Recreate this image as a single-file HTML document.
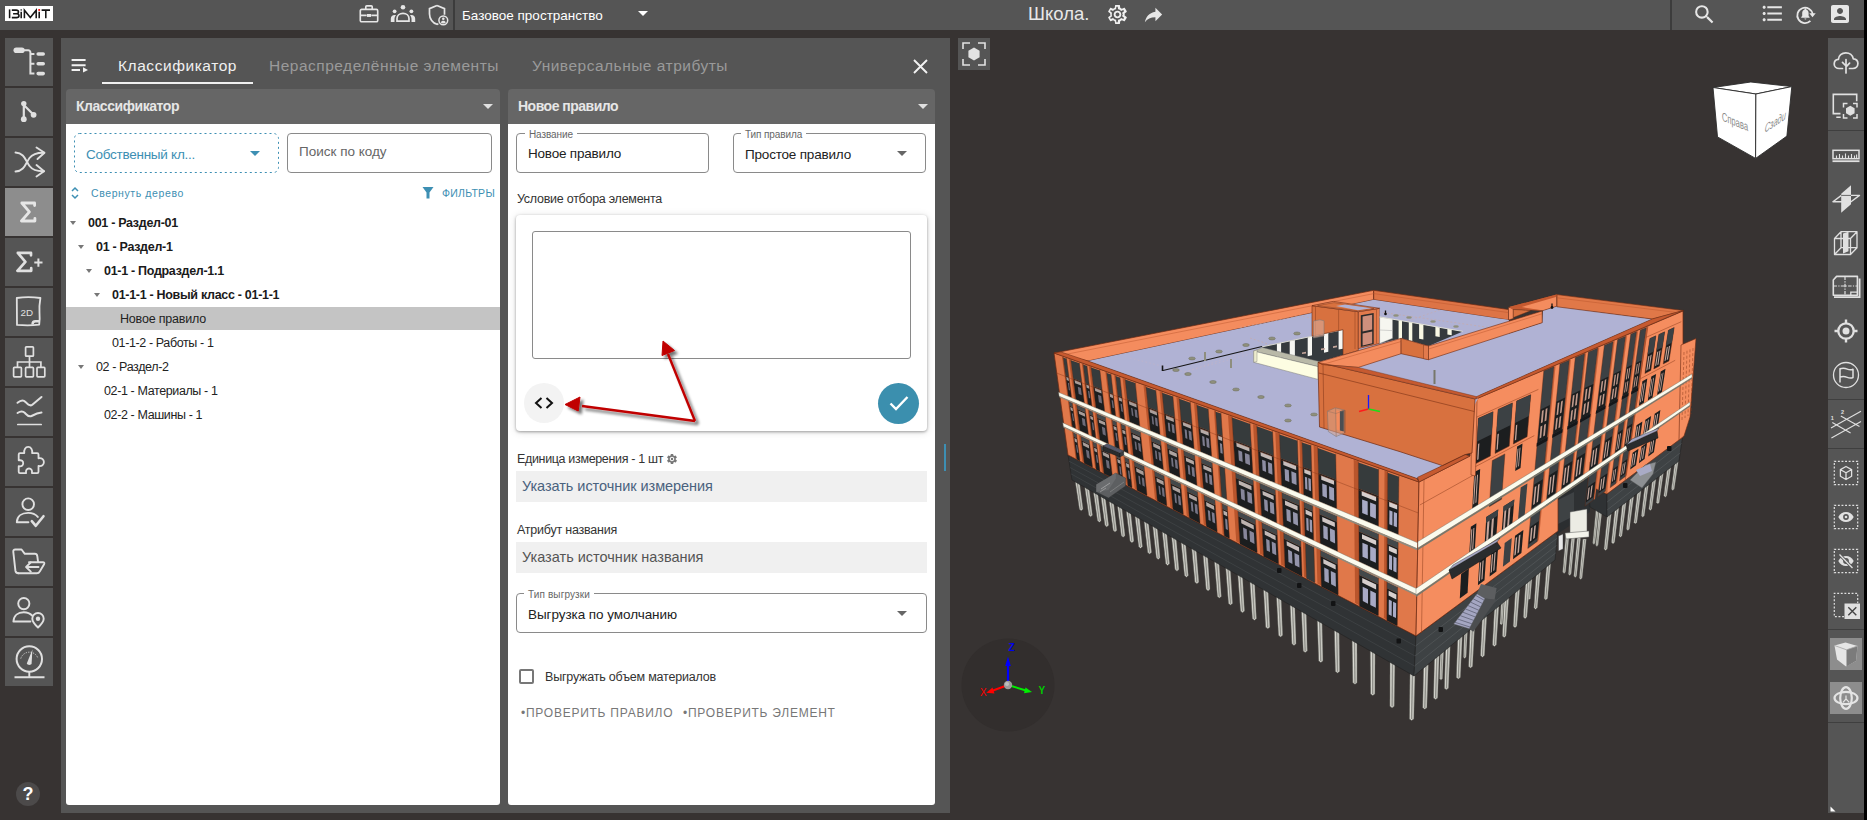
<!DOCTYPE html>
<html lang="ru">
<head>
<meta charset="utf-8">
<title>BIMIT</title>
<style>
*{box-sizing:border-box;margin:0;padding:0}
html,body{width:1867px;height:820px;overflow:hidden;background:#000}
body{font-family:"Liberation Sans",sans-serif;position:relative;color:#222}
.abs{position:absolute}
#app{position:absolute;left:0;top:0;width:1864px;height:820px;background:#373332;overflow:hidden}
#topbar{position:absolute;left:0;top:0;width:1864px;height:30px;background:#555}
.t{position:absolute;white-space:nowrap;line-height:1}
.sb{position:absolute;left:5px;width:48px;height:48px;background:#555}
.sb.act{background:#8d8d8d}
.sb svg{position:absolute;left:0;top:0}
#panel{position:absolute;left:61px;top:38px;width:889px;height:775px;background:#555}
.hdr{position:absolute;top:51px;height:35px;background:#666;border-radius:4px 4px 0 0}
.hdr .t{color:#e6e6e6;font-weight:bold;font-size:14px;top:10px;left:10px}
.body{position:absolute;top:86px;height:681px;background:#fff;border-radius:0 0 3px 3px}
.fld{position:absolute;border:1px solid #8a8a8a;border-radius:4px;height:40px}
.lbl{position:absolute;font-size:10px;letter-spacing:-.1px;color:#666;background:#fff;padding:0 4px;line-height:1;white-space:nowrap}
.row{position:absolute;left:0;width:434px;height:24px;font-size:12.5px;line-height:24px;white-space:nowrap;color:#222;letter-spacing:-.38px}
.row b{font-weight:bold;color:#1a1a1a;letter-spacing:-.3px}
.car{position:absolute;top:10px;width:0;height:0;border-left:3.5px solid transparent;border-right:3.5px solid transparent;border-top:4px solid #777}
#rtool{position:absolute;left:1828px;top:38px;width:36px;height:775px;background:#555}
.rb{position:absolute;left:0;width:36px;height:36px}
</style>
</head>
<body>
<div id="app">

<!-- ================= 3D VIEWPORT ================= -->
<svg class="abs" style="left:950px;top:30px" width="878" height="790" viewBox="950 30 878 790">
<circle cx="1008" cy="685" r="46.500" fill="#322e2d"/>
<polyline points="1008,685 1008,661" fill="none" stroke="#0000ff" stroke-width="2.2"/>
<polygon points="1008,656.5 1010.8,666 1005.2,666" fill="#0000ff"/>
<polyline points="1008,685 991,691.3" fill="none" stroke="#ff0000" stroke-width="2.0"/>
<polygon points="986.3,692.8 992.5,687.5 994.5,693.5" fill="#ff0000"/>
<polyline points="1008,685 1026,690.5" fill="none" stroke="#00ee00" stroke-width="2.0"/>
<polygon points="1032,692 1024,693.3 1025.5,687.5" fill="#00ee00"/>
<circle cx="1008" cy="685" r="4.200" fill="#9a9a9a"/><circle cx="1007" cy="684" r="2" fill="#bdbdbd"/>
<text x="1008.500" y="651" font-family="Liberation Sans" font-size="10" font-weight="bold" fill="#0000ee">Z</text>
<text x="980" y="695.500" font-family="Liberation Sans" font-size="10" fill="#ff0000">X</text>
<text x="1038.500" y="694" font-family="Liberation Sans" font-size="10" font-weight="bold" fill="#00cc00">Y</text>
<polygon points="1074.9,479.3 1079.1,479.3 1083,509.2 1081.2,510.8 1079.4,509.2" fill="#d9d9d2" stroke="#55544f" stroke-width="0.5"/>
<polyline points="1077,480.3 1081.2,509.4" fill="none" stroke="#8e8e88" stroke-width="1.2591325301204819"/>
<polyline points="1078.3,480.3 1082.4,509" fill="none" stroke="#b4b4ac" stroke-width="0.6"/>
<polygon points="1084.4,484.8 1088.6,484.8 1092.4,515.2 1090.6,516.8 1088.8,515.2" fill="#d9d9d2" stroke="#55544f" stroke-width="0.5"/>
<polyline points="1086.5,485.8 1090.6,515.4" fill="none" stroke="#8e8e88" stroke-width="1.2659999999999998"/>
<polyline points="1087.8,485.8 1091.8,515" fill="none" stroke="#b4b4ac" stroke-width="0.6"/>
<polygon points="1093.1,489.8 1097.4,489.8 1101.1,520.7 1099.3,522.3 1097.5,520.7" fill="#d9d9d2" stroke="#55544f" stroke-width="0.5"/>
<polyline points="1095.2,490.8 1099.3,520.9" fill="none" stroke="#8e8e88" stroke-width="1.272289156626506"/>
<polyline points="1096.6,490.8 1100.5,520.5" fill="none" stroke="#b4b4ac" stroke-width="0.6"/>
<polygon points="1100.6,494.2 1104.9,494.2 1108.6,525.3 1106.7,526.9 1104.9,525.3" fill="#d9d9d2" stroke="#55544f" stroke-width="0.5"/>
<polyline points="1102.8,495.2 1106.7,525.5" fill="none" stroke="#8e8e88" stroke-width="1.277710843373494"/>
<polyline points="1104.1,495.2 1108,525.1" fill="none" stroke="#b4b4ac" stroke-width="0.6"/>
<polygon points="1108.9,499 1113.2,499 1116.8,530.5 1115,532.1 1113.2,530.5" fill="#d9d9d2" stroke="#55544f" stroke-width="0.5"/>
<polyline points="1111.1,500 1115,530.7" fill="none" stroke="#8e8e88" stroke-width="1.283710843373494"/>
<polyline points="1112.4,500 1116.2,530.3" fill="none" stroke="#b4b4ac" stroke-width="0.6"/>
<polygon points="1117.2,503.7 1121.4,503.7 1125,535.7 1123.1,537.3 1121.3,535.7" fill="#d9d9d2" stroke="#55544f" stroke-width="0.5"/>
<polyline points="1119.3,504.7 1123.1,535.9" fill="none" stroke="#8e8e88" stroke-width="1.2896385542168676"/>
<polyline points="1120.6,504.7 1124.4,535.5" fill="none" stroke="#b4b4ac" stroke-width="0.6"/>
<polygon points="1126,508.8 1130.3,508.8 1133.8,541.2 1131.9,542.8 1130,541.2" fill="#d9d9d2" stroke="#55544f" stroke-width="0.5"/>
<polyline points="1128.1,509.8 1131.9,541.4" fill="none" stroke="#8e8e88" stroke-width="1.296"/>
<polyline points="1129.5,509.8 1133.2,541" fill="none" stroke="#b4b4ac" stroke-width="0.6"/>
<polygon points="1134.7,513.8 1139,513.8 1142.4,546.7 1140.5,548.3 1138.7,546.7" fill="#d9d9d2" stroke="#55544f" stroke-width="0.5"/>
<polyline points="1136.8,514.8 1140.5,546.9" fill="none" stroke="#8e8e88" stroke-width="1.302289156626506"/>
<polyline points="1138.2,514.8 1141.8,546.5" fill="none" stroke="#b4b4ac" stroke-width="0.6"/>
<polygon points="1143.8,519.1 1148.1,519.1 1151.5,552.4 1149.6,554 1147.7,552.4" fill="#d9d9d2" stroke="#55544f" stroke-width="0.5"/>
<polyline points="1146,520.1 1149.6,552.6" fill="none" stroke="#8e8e88" stroke-width="1.308867469879518"/>
<polyline points="1147.3,520.1 1150.9,552.2" fill="none" stroke="#b4b4ac" stroke-width="0.6"/>
<polygon points="1152.5,524.1 1156.9,524.1 1160.1,557.8 1158.2,559.4 1156.3,557.8" fill="#d9d9d2" stroke="#55544f" stroke-width="0.5"/>
<polyline points="1154.7,525.1 1158.2,558" fill="none" stroke="#8e8e88" stroke-width="1.3151566265060242"/>
<polyline points="1156.1,525.1 1159.5,557.6" fill="none" stroke="#b4b4ac" stroke-width="0.6"/>
<polygon points="1162,529.6 1166.4,529.6 1169.5,563.8 1167.6,565.4 1165.7,563.8" fill="#d9d9d2" stroke="#55544f" stroke-width="0.5"/>
<polyline points="1164.2,530.6 1167.6,564" fill="none" stroke="#8e8e88" stroke-width="1.3220240963855423"/>
<polyline points="1165.6,530.6 1168.9,563.6" fill="none" stroke="#b4b4ac" stroke-width="0.6"/>
<polygon points="1171.4,535.1 1175.9,535.1 1178.9,569.6 1177,571.2 1175,569.6" fill="#d9d9d2" stroke="#55544f" stroke-width="0.5"/>
<polyline points="1173.6,536.1 1177,569.8" fill="none" stroke="#8e8e88" stroke-width="1.3288192771084337"/>
<polyline points="1175.1,536.1 1178.3,569.4" fill="none" stroke="#b4b4ac" stroke-width="0.6"/>
<polygon points="1180.9,540.5 1185.4,540.5 1188.3,575.6 1186.4,577.2 1184.5,575.6" fill="#d9d9d2" stroke="#55544f" stroke-width="0.5"/>
<polyline points="1183.2,541.5 1186.4,575.8" fill="none" stroke="#8e8e88" stroke-width="1.3356867469879516"/>
<polyline points="1184.6,541.5 1187.7,575.4" fill="none" stroke="#b4b4ac" stroke-width="0.6"/>
<polygon points="1191.6,546.7 1196,546.7 1198.8,582.2 1196.9,583.8 1194.9,582.2" fill="#d9d9d2" stroke="#55544f" stroke-width="0.5"/>
<polyline points="1193.8,547.7 1196.9,582.4" fill="none" stroke="#8e8e88" stroke-width="1.3433493975903614"/>
<polyline points="1195.2,547.7 1198.2,582" fill="none" stroke="#b4b4ac" stroke-width="0.6"/>
<polygon points="1202.9,553.2 1207.4,553.2 1210,589.3 1208.1,590.9 1206.1,589.3" fill="#d9d9d2" stroke="#55544f" stroke-width="0.5"/>
<polyline points="1205.1,554.2 1208.1,589.5" fill="none" stroke="#8e8e88" stroke-width="1.3515180722891567"/>
<polyline points="1206.6,554.2 1209.4,589.1" fill="none" stroke="#b4b4ac" stroke-width="0.6"/>
<polygon points="1214.3,559.8 1218.8,559.8 1221.3,596.5 1219.3,598.1 1217.4,596.5" fill="#d9d9d2" stroke="#55544f" stroke-width="0.5"/>
<polyline points="1216.6,560.8 1219.3,596.7" fill="none" stroke="#8e8e88" stroke-width="1.3597590361445784"/>
<polyline points="1218,560.8 1220.7,596.3" fill="none" stroke="#b4b4ac" stroke-width="0.6"/>
<polygon points="1225.6,566.3 1230.2,566.3 1232.5,603.5 1230.5,605.1 1228.5,603.5" fill="#d9d9d2" stroke="#55544f" stroke-width="0.5"/>
<polyline points="1227.9,567.3 1230.5,603.7" fill="none" stroke="#8e8e88" stroke-width="1.3679277108433736"/>
<polyline points="1229.4,567.3 1231.9,603.3" fill="none" stroke="#b4b4ac" stroke-width="0.6"/>
<polygon points="1237.7,573.3 1242.3,573.3 1244.5,611.1 1242.5,612.7 1240.5,611.1" fill="#d9d9d2" stroke="#55544f" stroke-width="0.5"/>
<polyline points="1240,574.3 1242.5,611.3" fill="none" stroke="#8e8e88" stroke-width="1.3766746987951808"/>
<polyline points="1241.5,574.3 1243.9,610.9" fill="none" stroke="#b4b4ac" stroke-width="0.6"/>
<polygon points="1249.8,580.3 1254.5,580.3 1256.4,618.7 1254.4,620.3 1252.4,618.7" fill="#d9d9d2" stroke="#55544f" stroke-width="0.5"/>
<polyline points="1252.2,581.3 1254.4,618.9" fill="none" stroke="#8e8e88" stroke-width="1.385421686746988"/>
<polyline points="1253.7,581.3 1255.8,618.5" fill="none" stroke="#b4b4ac" stroke-width="0.6"/>
<polygon points="1263.4,588.1 1268,588.1 1269.8,627.2 1267.8,628.8 1265.7,627.2" fill="#d9d9d2" stroke="#55544f" stroke-width="0.5"/>
<polyline points="1265.7,589.1 1267.8,627.4" fill="none" stroke="#8e8e88" stroke-width="1.3951807228915662"/>
<polyline points="1267.2,589.1 1269.2,627" fill="none" stroke="#b4b4ac" stroke-width="0.6"/>
<polygon points="1276.4,595.7 1281.1,595.7 1282.6,635.3 1280.6,636.9 1278.5,635.3" fill="#d9d9d2" stroke="#55544f" stroke-width="0.5"/>
<polyline points="1278.7,596.7 1280.6,635.5" fill="none" stroke="#8e8e88" stroke-width="1.404578313253012"/>
<polyline points="1280.3,596.7 1282,635.1" fill="none" stroke="#b4b4ac" stroke-width="0.6"/>
<polygon points="1290,603.5 1294.7,603.5 1296.1,643.8 1294,645.4 1291.9,643.8" fill="#d9d9d2" stroke="#55544f" stroke-width="0.5"/>
<polyline points="1292.4,604.5 1294,644" fill="none" stroke="#8e8e88" stroke-width="1.4144096385542166"/>
<polyline points="1293.9,604.5 1295.5,643.6" fill="none" stroke="#b4b4ac" stroke-width="0.6"/>
<polygon points="1301.4,610.1 1306.2,610.1 1307.3,651 1305.2,652.6 1303.2,651" fill="#d9d9d2" stroke="#55544f" stroke-width="0.5"/>
<polyline points="1303.8,611.1 1305.2,651.2" fill="none" stroke="#8e8e88" stroke-width="1.4226506024096384"/>
<polyline points="1305.4,611.1 1306.7,650.8" fill="none" stroke="#b4b4ac" stroke-width="0.6"/>
<polygon points="1317.2,619.3 1322,619.3 1322.9,660.9 1320.8,662.5 1318.7,660.9" fill="#d9d9d2" stroke="#55544f" stroke-width="0.5"/>
<polyline points="1319.6,620.3 1320.8,661.1" fill="none" stroke="#8e8e88" stroke-width="1.4340722891566264"/>
<polyline points="1321.2,620.3 1322.3,660.7" fill="none" stroke="#b4b4ac" stroke-width="0.6"/>
<polygon points="1334.3,629.1 1339.1,629.1 1339.6,671.5 1337.5,673.1 1335.4,671.5" fill="#d9d9d2" stroke="#55544f" stroke-width="0.5"/>
<polyline points="1336.7,630.1 1337.5,671.7" fill="none" stroke="#8e8e88" stroke-width="1.4463614457831324"/>
<polyline points="1338.3,630.1 1339,671.3" fill="none" stroke="#b4b4ac" stroke-width="0.6"/>
<polygon points="1352.1,639.4 1357,639.4 1357.1,682.7 1355,684.3 1352.8,682.7" fill="#d9d9d2" stroke="#55544f" stroke-width="0.5"/>
<polyline points="1354.5,640.4 1355,682.9" fill="none" stroke="#8e8e88" stroke-width="1.4592289156626506"/>
<polyline points="1356.2,640.4 1356.5,682.5" fill="none" stroke="#b4b4ac" stroke-width="0.6"/>
<polygon points="1370.2,649.9 1375.1,649.9 1374.9,694 1372.7,695.6 1370.6,694" fill="#d9d9d2" stroke="#55544f" stroke-width="0.5"/>
<polyline points="1372.7,650.9 1372.7,694.2" fill="none" stroke="#8e8e88" stroke-width="1.4723132530120482"/>
<polyline points="1374.3,650.9 1374.3,693.8" fill="none" stroke="#b4b4ac" stroke-width="0.6"/>
<polygon points="1390,661.2 1394.9,661.2 1394.2,706.3 1392.1,707.9 1389.9,706.3" fill="#d9d9d2" stroke="#55544f" stroke-width="0.5"/>
<polyline points="1392.5,662.2 1392.1,706.5" fill="none" stroke="#8e8e88" stroke-width="1.48655421686747"/>
<polyline points="1394.1,662.2 1393.6,706.1" fill="none" stroke="#b4b4ac" stroke-width="0.6"/>
<polygon points="1410,672.8 1415,672.8 1413.8,718.9 1411.6,720.5 1409.4,718.9" fill="#d9d9d2" stroke="#55544f" stroke-width="0.5"/>
<polyline points="1412.5,673.8 1411.6,719.1" fill="none" stroke="#8e8e88" stroke-width="1.5010120481927711"/>
<polyline points="1414.2,673.8 1413.2,718.7" fill="none" stroke="#b4b4ac" stroke-width="0.6"/>
<polygon points="1440.5,643.8 1443.9,643.8 1442.4,678.6 1441,680.2 1439.6,678.6" fill="#d9d9d2" stroke="#55544f" stroke-width="0.5"/>
<polyline points="1442.2,644.8 1441,678.8" fill="none" stroke="#8e8e88" stroke-width="1.0136842105263157"/>
<polyline points="1443.1,644.8 1441.8,678.4" fill="none" stroke="#b4b4ac" stroke-width="0.6"/>
<polygon points="1464.6,622.9 1467.9,622.9 1466.1,656.9 1464.7,658.5 1463.4,656.9" fill="#d9d9d2" stroke="#55544f" stroke-width="0.5"/>
<polyline points="1466.3,623.9 1464.7,657.1" fill="none" stroke="#8e8e88" stroke-width="0.9884210526315789"/>
<polyline points="1467.1,623.9 1465.5,656.7" fill="none" stroke="#b4b4ac" stroke-width="0.6"/>
<polygon points="1501.8,590.8 1504.9,590.8 1502.6,623.5 1501.3,625.1 1500,623.5" fill="#d9d9d2" stroke="#55544f" stroke-width="0.5"/>
<polyline points="1503.4,591.8 1501.3,623.7" fill="none" stroke="#8e8e88" stroke-width="0.9494736842105262"/>
<polyline points="1504.1,591.8 1502,623.3" fill="none" stroke="#b4b4ac" stroke-width="0.6"/>
<polygon points="1529.9,566.5 1533,566.5 1530.3,598.2 1529,599.8 1527.8,598.2" fill="#d9d9d2" stroke="#55544f" stroke-width="0.5"/>
<polyline points="1531.4,567.5 1529,598.4" fill="none" stroke="#8e8e88" stroke-width="0.9199999999999999"/>
<polyline points="1532.2,567.5 1529.7,598" fill="none" stroke="#b4b4ac" stroke-width="0.6"/>
<polygon points="1423.6,664.7 1428.3,664.7 1426.9,707.7 1424.8,709.3 1422.7,707.7" fill="#d9d9d2" stroke="#55544f" stroke-width="0.5"/>
<polyline points="1426,665.7 1424.8,707.9" fill="none" stroke="#8e8e88" stroke-width="1.439417004048583"/>
<polyline points="1427.5,665.7 1426.3,707.5" fill="none" stroke="#b4b4ac" stroke-width="0.6"/>
<polygon points="1434.5,655.6 1439.2,655.6 1437.6,698 1435.6,699.6 1433.5,698" fill="#d9d9d2" stroke="#55544f" stroke-width="0.5"/>
<polyline points="1436.9,656.6 1435.6,698.2" fill="none" stroke="#8e8e88" stroke-width="1.4182348178137651"/>
<polyline points="1438.4,656.6 1437,697.8" fill="none" stroke="#b4b4ac" stroke-width="0.6"/>
<polygon points="1445.6,646.3 1450.2,646.3 1448.4,688.2 1446.4,689.8 1444.4,688.2" fill="#d9d9d2" stroke="#55544f" stroke-width="0.5"/>
<polyline points="1447.9,647.3 1446.4,688.4" fill="none" stroke="#8e8e88" stroke-width="1.3968582995951415"/>
<polyline points="1449.4,647.3 1447.8,688" fill="none" stroke="#b4b4ac" stroke-width="0.6"/>
<polygon points="1457.8,636.1 1462.3,636.1 1460.3,677.4 1458.3,679 1456.3,677.4" fill="#d9d9d2" stroke="#55544f" stroke-width="0.5"/>
<polyline points="1460,637.1 1458.3,677.6" fill="none" stroke="#8e8e88" stroke-width="1.373344129554656"/>
<polyline points="1461.5,637.1 1459.7,677.2" fill="none" stroke="#b4b4ac" stroke-width="0.6"/>
<polygon points="1470.2,625.7 1474.7,625.7 1472.5,666.4 1470.5,668 1468.6,666.4" fill="#d9d9d2" stroke="#55544f" stroke-width="0.5"/>
<polyline points="1472.5,626.7 1470.5,666.6" fill="none" stroke="#8e8e88" stroke-width="1.3492469635627529"/>
<polyline points="1473.9,626.7 1471.9,666.2" fill="none" stroke="#b4b4ac" stroke-width="0.6"/>
<polygon points="1482.4,615.5 1486.8,615.5 1484.4,655.6 1482.4,657.2 1480.5,655.6" fill="#d9d9d2" stroke="#55544f" stroke-width="0.5"/>
<polyline points="1484.6,616.5 1482.4,655.8" fill="none" stroke="#8e8e88" stroke-width="1.3257327935222671"/>
<polyline points="1486,616.5 1483.8,655.4" fill="none" stroke="#b4b4ac" stroke-width="0.6"/>
<polygon points="1494.6,605.3 1498.9,605.3 1496.3,644.9 1494.4,646.5 1492.5,644.9" fill="#d9d9d2" stroke="#55544f" stroke-width="0.5"/>
<polyline points="1496.7,606.3 1494.4,645.1" fill="none" stroke="#8e8e88" stroke-width="1.3022186234817812"/>
<polyline points="1498.1,606.3 1495.7,644.7" fill="none" stroke="#b4b4ac" stroke-width="0.6"/>
<polygon points="1504.5,597 1508.8,597 1506,636 1504.2,637.6 1502.3,636" fill="#d9d9d2" stroke="#55544f" stroke-width="0.5"/>
<polyline points="1506.7,598 1504.2,636.2" fill="none" stroke="#8e8e88" stroke-width="1.28297975708502"/>
<polyline points="1508,598 1505.4,635.8" fill="none" stroke="#b4b4ac" stroke-width="0.6"/>
<polygon points="1515.6,587.7 1519.8,587.7 1516.8,626.2 1515,627.8 1513.2,626.2" fill="#d9d9d2" stroke="#55544f" stroke-width="0.5"/>
<polyline points="1517.7,588.7 1515,626.4" fill="none" stroke="#8e8e88" stroke-width="1.2616032388663967"/>
<polyline points="1519,588.7 1516.2,626" fill="none" stroke="#b4b4ac" stroke-width="0.6"/>
<polygon points="1525.9,579.1 1530,579.1 1526.9,617.1 1525.1,618.7 1523.3,617.1" fill="#d9d9d2" stroke="#55544f" stroke-width="0.5"/>
<polyline points="1527.9,580.1 1525.1,617.3" fill="none" stroke="#8e8e88" stroke-width="1.2417813765182186"/>
<polyline points="1529.2,580.1 1526.3,616.9" fill="none" stroke="#b4b4ac" stroke-width="0.6"/>
<polygon points="1536.5,570.2 1540.6,570.2 1537.3,607.7 1535.6,609.3 1533.9,607.7" fill="#d9d9d2" stroke="#55544f" stroke-width="0.5"/>
<polyline points="1538.6,571.2 1535.6,607.9" fill="none" stroke="#8e8e88" stroke-width="1.2211821862348178"/>
<polyline points="1539.8,571.2 1536.7,607.5" fill="none" stroke="#b4b4ac" stroke-width="0.6"/>
<polygon points="1546.9,561.5 1550.9,561.5 1547.5,598.5 1545.8,600.1 1544.1,598.5" fill="#d9d9d2" stroke="#55544f" stroke-width="0.5"/>
<polyline points="1548.9,562.5 1545.8,598.7" fill="none" stroke="#8e8e88" stroke-width="1.2011659919028337"/>
<polyline points="1550.1,562.5 1546.9,598.3" fill="none" stroke="#b4b4ac" stroke-width="0.6"/>
<polygon points="1565.8,535 1569.2,535 1565.5,572 1564.1,573.6 1562.7,572" fill="#d9d9d2" stroke="#55544f" stroke-width="0.5"/>
<polyline points="1567.5,536 1564.1,572.2" fill="none" stroke="#8e8e88" stroke-width="1.02"/>
<polyline points="1568.4,536 1564.9,571.8" fill="none" stroke="#b4b4ac" stroke-width="0.6"/>
<polygon points="1571.5,536.3 1574.9,536.3 1571.1,574 1569.7,575.6 1568.3,574" fill="#d9d9d2" stroke="#55544f" stroke-width="0.5"/>
<polyline points="1573.2,537.3 1569.7,574.2" fill="none" stroke="#8e8e88" stroke-width="1.02"/>
<polyline points="1574.1,537.3 1570.5,573.8" fill="none" stroke="#b4b4ac" stroke-width="0.6"/>
<polygon points="1577.2,537.7 1580.6,537.7 1576.6,576 1575.2,577.6 1573.8,576" fill="#d9d9d2" stroke="#55544f" stroke-width="0.5"/>
<polyline points="1578.9,538.7 1575.2,576.2" fill="none" stroke="#8e8e88" stroke-width="1.02"/>
<polyline points="1579.8,538.7 1576,575.8" fill="none" stroke="#b4b4ac" stroke-width="0.6"/>
<polygon points="1582.9,539 1586.3,539 1582.1,578 1580.7,579.6 1579.3,578" fill="#d9d9d2" stroke="#55544f" stroke-width="0.5"/>
<polyline points="1584.6,540 1580.7,578.2" fill="none" stroke="#8e8e88" stroke-width="1.02"/>
<polyline points="1585.5,540 1581.5,577.8" fill="none" stroke="#b4b4ac" stroke-width="0.6"/>
<polygon points="1596.1,508 1599.1,508 1595.1,543 1593.9,544.6 1592.7,543" fill="#d9d9d2" stroke="#55544f" stroke-width="0.5"/>
<polyline points="1597.6,509 1593.9,543.2" fill="none" stroke="#8e8e88" stroke-width="0.8999999999999999"/>
<polyline points="1598.3,509 1594.5,542.8" fill="none" stroke="#b4b4ac" stroke-width="0.6"/>
<polygon points="1599.1,510 1602.1,510 1598.1,545 1596.9,546.6 1595.7,545" fill="#d9d9d2" stroke="#55544f" stroke-width="0.5"/>
<polyline points="1600.6,511 1596.9,545.2" fill="none" stroke="#8e8e88" stroke-width="0.8999999999999999"/>
<polyline points="1601.3,511 1597.5,544.8" fill="none" stroke="#b4b4ac" stroke-width="0.6"/>
<polygon points="1607.7,512 1611.5,512 1607.2,549 1605.6,550.6 1604,549" fill="#d9d9d2" stroke="#55544f" stroke-width="0.5"/>
<polyline points="1609.6,513 1605.6,549.2" fill="none" stroke="#8e8e88" stroke-width="1.14"/>
<polyline points="1610.7,513 1606.6,548.8" fill="none" stroke="#b4b4ac" stroke-width="0.6"/>
<polygon points="1615.2,506.2 1619,506.2 1614.6,542.3 1613,543.9 1611.4,542.3" fill="#d9d9d2" stroke="#55544f" stroke-width="0.5"/>
<polyline points="1617.1,507.2 1613,542.5" fill="none" stroke="#8e8e88" stroke-width="1.1266666666666667"/>
<polyline points="1618.2,507.2 1614,542.1" fill="none" stroke="#b4b4ac" stroke-width="0.6"/>
<polygon points="1622.7,500.4 1626.4,500.4 1622,535.7 1620.5,537.3 1618.9,535.7" fill="#d9d9d2" stroke="#55544f" stroke-width="0.5"/>
<polyline points="1624.6,501.4 1620.5,535.9" fill="none" stroke="#8e8e88" stroke-width="1.1133333333333333"/>
<polyline points="1625.6,501.4 1621.4,535.5" fill="none" stroke="#b4b4ac" stroke-width="0.6"/>
<polygon points="1630.2,494.7 1633.9,494.7 1629.4,529 1627.9,530.6 1626.4,529" fill="#d9d9d2" stroke="#55544f" stroke-width="0.5"/>
<polyline points="1632,495.7 1627.9,529.2" fill="none" stroke="#8e8e88" stroke-width="1.0999999999999999"/>
<polyline points="1633.1,495.7 1628.8,528.8" fill="none" stroke="#b4b4ac" stroke-width="0.6"/>
<polygon points="1637.7,488.9 1641.3,488.9 1636.9,522.3 1635.4,523.9 1633.9,522.3" fill="#d9d9d2" stroke="#55544f" stroke-width="0.5"/>
<polyline points="1639.5,489.9 1635.4,522.5" fill="none" stroke="#8e8e88" stroke-width="1.0866666666666667"/>
<polyline points="1640.5,489.9 1636.3,522.1" fill="none" stroke="#b4b4ac" stroke-width="0.6"/>
<polygon points="1645.2,483.1 1648.7,483.1 1644.3,515.7 1642.8,517.3 1641.3,515.7" fill="#d9d9d2" stroke="#55544f" stroke-width="0.5"/>
<polyline points="1647,484.1 1642.8,515.9" fill="none" stroke="#8e8e88" stroke-width="1.0733333333333333"/>
<polyline points="1647.9,484.1 1643.7,515.5" fill="none" stroke="#b4b4ac" stroke-width="0.6"/>
<polygon points="1652.7,477.3 1656.2,477.3 1651.8,509 1650.3,510.6 1648.8,509" fill="#d9d9d2" stroke="#55544f" stroke-width="0.5"/>
<polyline points="1654.4,478.3 1650.3,509.2" fill="none" stroke="#8e8e88" stroke-width="1.0599999999999998"/>
<polyline points="1655.4,478.3 1651.2,508.8" fill="none" stroke="#b4b4ac" stroke-width="0.6"/>
<polygon points="1660.1,471.6 1663.6,471.6 1659.2,502.3 1657.8,503.9 1656.3,502.3" fill="#d9d9d2" stroke="#55544f" stroke-width="0.5"/>
<polyline points="1661.9,472.6 1657.8,502.5" fill="none" stroke="#8e8e88" stroke-width="1.0466666666666666"/>
<polyline points="1662.8,472.6 1658.6,502.1" fill="none" stroke="#b4b4ac" stroke-width="0.6"/>
<polygon points="1667.6,465.8 1671.1,465.8 1666.7,495.7 1665.3,497.3 1663.8,495.7" fill="#d9d9d2" stroke="#55544f" stroke-width="0.5"/>
<polyline points="1669.3,466.8 1665.3,495.9" fill="none" stroke="#8e8e88" stroke-width="1.0333333333333332"/>
<polyline points="1670.3,466.8 1666.1,495.5" fill="none" stroke="#b4b4ac" stroke-width="0.6"/>
<polygon points="1675.1,460 1678.5,460 1674.2,489 1672.8,490.6 1671.4,489" fill="#d9d9d2" stroke="#55544f" stroke-width="0.5"/>
<polyline points="1676.8,461 1672.8,489.2" fill="none" stroke="#8e8e88" stroke-width="1.02"/>
<polyline points="1677.7,461 1673.6,488.8" fill="none" stroke="#b4b4ac" stroke-width="0.6"/>
<polygon points="1068,455 1416,636 1414,676 1072,480" fill="#303335" stroke="#222" stroke-width="0.6"/>
<polygon points="1416,636 1558,531 1555,560 1414,676" fill="#3e4244" stroke="#222" stroke-width="0.6"/>
<polyline points="1069,461.2 1415.5,646" fill="none" stroke="#4b4f51" stroke-width="0.5"/>
<polyline points="1415.5,646 1557.2,538.2" fill="none" stroke="#5f6365" stroke-width="0.5"/>
<polyline points="1070,467.5 1415,656" fill="none" stroke="#4b4f51" stroke-width="0.5"/>
<polyline points="1415,656 1556.5,545.5" fill="none" stroke="#5f6365" stroke-width="0.5"/>
<polyline points="1071,473.8 1414.5,666" fill="none" stroke="#4b4f51" stroke-width="0.5"/>
<polyline points="1414.5,666 1555.8,552.8" fill="none" stroke="#5f6365" stroke-width="0.5"/>
<polygon points="1556,486 1590,462 1590,512 1556,535" fill="#2b2e30"/>
<polygon points="1558,500 1574,492 1574,516 1558,524" fill="#3e4244"/>
<polygon points="1574,480 1588.5,474 1588.5,510 1574,514" fill="#2e3133"/>
<polygon points="1570,512 1587,509 1587,533 1570,534" fill="#ecece4" stroke="#555" stroke-width="0.5"/>
<polygon points="1565,533 1589,531 1589,537 1566,539" fill="#f4f4ec" stroke="#555" stroke-width="0.5"/>
<polygon points="1558.5,536 1563,534 1563,549 1558.5,551" fill="#e8e8e8" stroke="#333" stroke-width="0.4"/>
<polygon points="1588.5,485 1607,494 1607,517 1590,507" fill="#2f3234" stroke="#222" stroke-width="0.5"/>
<polygon points="1607,494 1683,434 1679,461 1607,517" fill="#3e4244" stroke="#222" stroke-width="0.6"/>
<polyline points="1607,502.1 1681.6,443.4" fill="none" stroke="#5f6365" stroke-width="0.5"/>
<polyline points="1607,510.1 1680.2,452.9" fill="none" stroke="#5f6365" stroke-width="0.5"/>
<polygon points="1054,353 1419,482 1416,636 1068,455" fill="#e0784a" stroke="#6b2a12" stroke-width="0.7"/>
<polygon points="1061.9,356.3 1063,356.7 1076.6,458.5 1075.5,458" fill="#b9552c"/>
<polygon points="1063.1,357.4 1066.5,358.7 1068.9,376.8 1065.5,375.5" fill="#363b3c"/>
<polygon points="1065.5,375.5 1068.9,376.8 1071.6,397.7 1068.3,396.3" fill="#1c1e1f"/>
<polygon points="1066.2,376.8 1068.6,377.7 1069,380.9 1066.6,379.9" fill="#a89c98"/>
<polygon points="1067.9,382.8 1069.1,383.3 1070,390.4 1068.8,389.9" fill="#6c6a78"/>
<polygon points="1069,401.5 1072.3,403 1072.9,407.2 1069.5,405.7" fill="#43484a"/>
<polygon points="1069.5,405.7 1072.9,407.2 1075.8,428.8 1072.4,427.3" fill="#1c1e1f"/>
<polygon points="1070.2,407 1072.6,408.1 1073.1,411.3 1070.6,410.3" fill="#a89c98"/>
<polygon points="1071.9,413.3 1073.1,413.8 1074.1,421.2 1072.9,420.6" fill="#6c6a78"/>
<polygon points="1073.1,432.3 1076.4,433.9 1077,438.3 1073.7,436.7" fill="#43484a"/>
<polygon points="1073.7,436.7 1077,438.3 1080,461 1076.7,459.2" fill="#1c1e1f"/>
<polygon points="1074.3,438.1 1076.8,439.2 1077.2,442.7 1074.8,441.5" fill="#a89c98"/>
<polygon points="1076.1,444.7 1077.3,445.3 1078.3,453 1077.1,452.4" fill="#6c6a78"/>
<polyline points="1063,356.7 1076.6,458.5" fill="none" stroke="#5c2410" stroke-width="0.4"/>
<polyline points="1066.4,357.9 1079.9,460.3" fill="none" stroke="#5c2410" stroke-width="0.4"/>
<polygon points="1068.7,358.7 1070.7,359.4 1084.1,462.5 1082.2,461.4" fill="#b9552c"/>
<polygon points="1070.8,360.2 1079.4,363.2 1081.7,381.7 1073.2,378.4" fill="#363b3c"/>
<polygon points="1073.2,378.4 1081.7,381.7 1084.4,403.1 1075.9,399.5" fill="#1c1e1f"/>
<polygon points="1074.6,380 1080.8,382.4 1081.2,385.6 1075.1,383.2" fill="#a89c98"/>
<polygon points="1077.8,386.7 1080.9,387.9 1081.8,395.2 1078.7,393.9" fill="#6c6a78"/>
<polygon points="1076.6,404.8 1085.1,408.4 1085.7,412.7 1077.1,409" fill="#43484a"/>
<polygon points="1077.1,409 1085.7,412.7 1088.5,434.8 1080,430.8" fill="#1c1e1f"/>
<polygon points="1078.6,410.7 1084.8,413.4 1085.2,416.7 1079.1,414" fill="#a89c98"/>
<polygon points="1081.8,417.7 1084.8,419 1085.8,426.5 1082.7,425.1" fill="#6c6a78"/>
<polygon points="1080.7,435.9 1089.1,440 1089.7,444.4 1081.2,440.3" fill="#43484a"/>
<polygon points="1081.2,440.3 1089.7,444.4 1092.6,467.5 1084.2,463.2" fill="#1c1e1f"/>
<polygon points="1082.7,442.1 1088.8,445.1 1089.2,448.6 1083.2,445.6" fill="#a89c98"/>
<polygon points="1085.9,449.5 1088.9,451 1089.9,458.9 1086.9,457.3" fill="#6c6a78"/>
<polyline points="1070.7,359.4 1084.1,462.5" fill="none" stroke="#5c2410" stroke-width="0.4"/>
<polyline points="1079.3,362.5 1092.5,466.8" fill="none" stroke="#5c2410" stroke-width="0.4"/>
<polygon points="1081.8,363.4 1083,363.8 1096.1,468.7 1095,468.1" fill="#b9552c"/>
<polygon points="1083.1,364.6 1087,365.9 1089.3,384.7 1085.4,383.2" fill="#363b3c"/>
<polygon points="1085.4,383.2 1089.3,384.7 1092,406.3 1088.1,404.6" fill="#1c1e1f"/>
<polygon points="1086.2,384.5 1089,385.6 1089.4,388.8 1086.6,387.7" fill="#a89c98"/>
<polygon points="1088,390.8 1089.4,391.3 1090.3,398.6 1088.9,398.1" fill="#6c6a78"/>
<polygon points="1088.8,410 1092.6,411.7 1093.2,416 1089.3,414.3" fill="#43484a"/>
<polygon points="1089.3,414.3 1093.2,416 1095.9,438.3 1092.1,436.5" fill="#1c1e1f"/>
<polygon points="1090.1,415.7 1092.8,416.9 1093.3,420.3 1090.5,419" fill="#a89c98"/>
<polygon points="1091.9,422.2 1093.3,422.8 1094.2,430.4 1092.8,429.8" fill="#6c6a78"/>
<polygon points="1092.7,441.7 1096.6,443.5 1097.1,448 1093.3,446.2" fill="#43484a"/>
<polygon points="1093.3,446.2 1097.1,448 1100,471.4 1096.2,469.4" fill="#1c1e1f"/>
<polygon points="1094.1,447.7 1096.8,449 1097.3,452.5 1094.5,451.2" fill="#a89c98"/>
<polygon points="1095.9,454.5 1097.3,455.2 1098.3,463.1 1096.9,462.4" fill="#6c6a78"/>
<polyline points="1083,363.8 1096.1,468.7" fill="none" stroke="#5c2410" stroke-width="0.4"/>
<polyline points="1086.9,365.2 1099.9,470.7" fill="none" stroke="#5c2410" stroke-width="0.4"/>
<polygon points="1088.8,365.8 1090.9,366.6 1103.8,472.7 1101.8,471.6" fill="#b9552c"/>
<polygon points="1091,367.4 1099.9,370.5 1102.1,389.6 1093.3,386.2" fill="#363b3c"/>
<polygon points="1093.3,386.2 1102.1,389.6 1104.7,411.6 1095.9,407.9" fill="#1c1e1f"/>
<polygon points="1094.8,387.8 1101.2,390.3 1101.6,393.6 1095.2,391.1" fill="#a89c98"/>
<polygon points="1098,394.7 1101.2,396 1102.1,403.5 1098.9,402.2" fill="#6c6a78"/>
<polygon points="1096.6,413.4 1105.4,417.1 1105.9,421.5 1097.1,417.7" fill="#43484a"/>
<polygon points="1097.1,417.7 1105.9,421.5 1108.6,444.2 1099.9,440.1" fill="#1c1e1f"/>
<polygon points="1098.6,419.4 1105,422.2 1105.4,425.6 1099.1,422.8" fill="#a89c98"/>
<polygon points="1101.8,426.6 1105,428 1105.9,435.7 1102.8,434.3" fill="#6c6a78"/>
<polygon points="1100.5,445.4 1109.2,449.6 1109.8,454.2 1101.1,449.9" fill="#43484a"/>
<polygon points="1101.1,449.9 1109.8,454.2 1112.6,477.9 1103.9,473.4" fill="#1c1e1f"/>
<polygon points="1102.6,451.8 1108.9,454.8 1109.3,458.4 1103,455.3" fill="#a89c98"/>
<polygon points="1105.8,459.4 1108.9,460.9 1109.9,469 1106.8,467.4" fill="#6c6a78"/>
<polyline points="1090.9,366.6 1103.8,472.7" fill="none" stroke="#5c2410" stroke-width="0.4"/>
<polyline points="1099.8,369.7 1112.5,477.2" fill="none" stroke="#5c2410" stroke-width="0.4"/>
<polygon points="1105.3,371.7 1106.6,372.1 1119.1,480.6 1117.9,480" fill="#b9552c"/>
<polygon points="1106.7,372.9 1111,374.5 1113.2,393.9 1108.9,392.2" fill="#363b3c"/>
<polygon points="1108.9,392.2 1113.2,393.9 1115.7,416.2 1111.5,414.4" fill="#1c1e1f"/>
<polygon points="1109.7,393.6 1112.8,394.8 1113.2,398.2 1110.1,397" fill="#a89c98"/>
<polygon points="1111.6,400.1 1113.1,400.7 1114,408.3 1112.5,407.7" fill="#6c6a78"/>
<polygon points="1112.1,420 1116.4,421.8 1116.9,426.3 1112.6,424.4" fill="#43484a"/>
<polygon points="1112.6,424.4 1116.9,426.3 1119.5,449.3 1115.3,447.4" fill="#1c1e1f"/>
<polygon points="1113.4,425.9 1116.5,427.2 1116.9,430.7 1113.8,429.3" fill="#a89c98"/>
<polygon points="1115.3,432.6 1116.9,433.3 1117.8,441.2 1116.2,440.5" fill="#6c6a78"/>
<polygon points="1115.9,452.8 1120.1,454.8 1120.6,459.4 1116.4,457.4" fill="#43484a"/>
<polygon points="1116.4,457.4 1120.6,459.4 1123.4,483.5 1119.2,481.3" fill="#1c1e1f"/>
<polygon points="1117.2,458.9 1120.3,460.4 1120.7,464 1117.7,462.5" fill="#a89c98"/>
<polygon points="1119.2,466 1120.7,466.8 1121.6,474.9 1120.1,474.2" fill="#6c6a78"/>
<polyline points="1106.6,372.1 1119.1,480.6" fill="none" stroke="#5c2410" stroke-width="0.4"/>
<polyline points="1110.9,373.7 1123.3,482.8" fill="none" stroke="#5c2410" stroke-width="0.4"/>
<polygon points="1114.1,374.8 1115.5,375.3 1127.8,485.1 1126.5,484.4" fill="#b9552c"/>
<polygon points="1115.6,376.1 1120,377.7 1122.1,397.3 1117.7,395.6" fill="#363b3c"/>
<polygon points="1117.7,395.6 1122.1,397.3 1124.6,419.9 1120.3,418.1" fill="#1c1e1f"/>
<polygon points="1118.6,397 1121.7,398.2 1122.1,401.7 1118.9,400.4" fill="#a89c98"/>
<polygon points="1120.5,403.6 1122,404.3 1122.9,411.9 1121.3,411.3" fill="#6c6a78"/>
<polygon points="1120.9,423.7 1125.2,425.6 1125.7,430.1 1121.4,428.2" fill="#43484a"/>
<polygon points="1121.4,428.2 1125.7,430.1 1128.3,453.5 1124,451.5" fill="#1c1e1f"/>
<polygon points="1122.2,429.7 1125.3,431.1 1125.7,434.6 1122.6,433.2" fill="#a89c98"/>
<polygon points="1124.1,436.6 1125.7,437.3 1126.6,445.2 1125,444.5" fill="#6c6a78"/>
<polygon points="1124.6,456.9 1128.9,459 1129.4,463.7 1125.1,461.6" fill="#43484a"/>
<polygon points="1125.1,461.6 1129.4,463.7 1132.1,488.1 1127.9,485.8" fill="#1c1e1f"/>
<polygon points="1126,463.1 1129.1,464.6 1129.5,468.3 1126.4,466.8" fill="#a89c98"/>
<polygon points="1127.9,470.3 1129.4,471.1 1130.4,479.4 1128.8,478.6" fill="#6c6a78"/>
<polyline points="1115.5,375.3 1127.8,485.1" fill="none" stroke="#5c2410" stroke-width="0.4"/>
<polyline points="1119.9,376.8 1132,487.3" fill="none" stroke="#5c2410" stroke-width="0.4"/>
<polygon points="1122.6,377.8 1125,378.7 1137,489.9 1134.7,488.7" fill="#b9552c"/>
<polygon points="1125.1,379.5 1135.3,383.1 1137.4,403.2 1127.2,399.3" fill="#363b3c"/>
<polygon points="1127.2,399.3 1137.4,403.2 1139.8,426.3 1129.7,422.1" fill="#1c1e1f"/>
<polygon points="1128.9,401 1136.3,403.9 1136.7,407.4 1129.3,404.5" fill="#a89c98"/>
<polygon points="1131,407.8 1132.6,408.5 1133.5,416.3 1131.9,415.6" fill="#6c6a78"/>
<polygon points="1134.5,409.2 1136.9,410.1 1137.7,418 1135.3,417" fill="#6c6a78"/>
<polygon points="1130.3,427.8 1140.4,432.1 1140.9,436.7 1130.8,432.3" fill="#43484a"/>
<polygon points="1130.8,432.3 1140.9,436.7 1143.4,460.5 1133.3,455.8" fill="#1c1e1f"/>
<polygon points="1132.5,434.2 1139.8,437.4 1140.2,441 1132.9,437.7" fill="#a89c98"/>
<polygon points="1134.6,441.2 1136.2,441.9 1137.1,450 1135.5,449.2" fill="#6c6a78"/>
<polygon points="1138,442.7 1140.4,443.8 1141.2,451.9 1138.9,450.8" fill="#6c6a78"/>
<polygon points="1133.9,461.3 1144,466.1 1144.5,470.9 1134.4,466.1" fill="#43484a"/>
<polygon points="1134.4,466.1 1144.5,470.9 1147.1,495.8 1137.1,490.6" fill="#1c1e1f"/>
<polygon points="1136.1,468.1 1143.4,471.6 1143.8,475.4 1136.5,471.8" fill="#a89c98"/>
<polygon points="1138.3,475.5 1139.9,476.3 1140.7,484.7 1139.1,483.8" fill="#6c6a78"/>
<polygon points="1141.7,477.2 1144,478.3 1144.9,486.7 1142.5,485.6" fill="#6c6a78"/>
<polyline points="1125,378.7 1137,489.9" fill="none" stroke="#5c2410" stroke-width="0.4"/>
<polyline points="1135.3,382.3 1147,495" fill="none" stroke="#5c2410" stroke-width="0.4"/>
<polygon points="1143.5,385.2 1145.9,386.1 1157.2,500.4 1155,499.2" fill="#b9552c"/>
<polygon points="1145.9,386.9 1155.8,390.4 1157.8,411.1 1148,407.3" fill="#363b3c"/>
<polygon points="1148,407.3 1157.8,411.1 1160.1,434.8 1150.3,430.7" fill="#1c1e1f"/>
<polygon points="1149.6,409.1 1156.7,411.8 1157.1,415.4 1150,412.6" fill="#ab9f9b"/>
<polygon points="1151.6,415.9 1153.2,416.6 1154,424.8 1152.4,424.1" fill="#706e7d"/>
<polygon points="1154.9,417.3 1157.2,418.2 1158,426.5 1155.7,425.5" fill="#706e7d"/>
<polygon points="1150.9,436.6 1160.6,440.7 1161.1,445.5 1151.3,441.2" fill="#43484a"/>
<polygon points="1151.3,441.2 1161.1,445.5 1163.4,469.9 1153.8,465.4" fill="#1c1e1f"/>
<polygon points="1153,443.1 1160,446.2 1160.4,449.9 1153.4,446.8" fill="#ab9f9b"/>
<polygon points="1154.9,450.3 1156.6,451 1157.4,459.5 1155.8,458.7" fill="#706e7d"/>
<polygon points="1158.3,451.8 1160.6,452.8 1161.4,461.3 1159.1,460.2" fill="#706e7d"/>
<polygon points="1154.3,471.1 1164,475.7 1164.4,480.6 1154.8,475.9" fill="#43484a"/>
<polygon points="1154.8,475.9 1164.4,480.6 1166.9,506.1 1157.3,501.1" fill="#1c1e1f"/>
<polygon points="1156.5,478 1163.4,481.3 1163.8,485.2 1156.8,481.8" fill="#ab9f9b"/>
<polygon points="1158.4,485.4 1160,486.2 1160.9,495.1 1159.3,494.2" fill="#706e7d"/>
<polygon points="1161.7,487.1 1164,488.2 1164.8,497.1 1162.5,495.9" fill="#706e7d"/>
<polyline points="1145.9,386.1 1157.2,500.4" fill="none" stroke="#5c2410" stroke-width="0.4"/>
<polyline points="1155.8,389.6 1166.8,505.3" fill="none" stroke="#5c2410" stroke-width="0.4"/>
<polygon points="1159.5,390.9 1162.1,391.8 1172.9,508.5 1170.4,507.2" fill="#b9552c"/>
<polygon points="1162.1,392.7 1172.9,396.5 1174.8,417.6 1164.1,413.5" fill="#363b3c"/>
<polygon points="1164.1,413.5 1174.8,417.6 1176.9,441.9 1166.3,437.4" fill="#1c1e1f"/>
<polygon points="1165.9,415.3 1173.6,418.3 1173.9,422 1166.2,419" fill="#aea39f"/>
<polygon points="1167.8,422.4 1169.7,423.1 1170.4,431.7 1168.6,430.9" fill="#747382"/>
<polygon points="1171.5,423.8 1174.1,424.9 1174.8,433.5 1172.3,432.5" fill="#747382"/>
<polygon points="1166.8,443.4 1177.5,447.9 1177.9,452.8 1167.3,448.2" fill="#43484a"/>
<polygon points="1167.3,448.2 1177.9,452.8 1180.1,477.8 1169.6,472.8" fill="#1c1e1f"/>
<polygon points="1169.1,450.1 1176.7,453.5 1177,457.2 1169.4,453.9" fill="#aea39f"/>
<polygon points="1171,457.4 1172.8,458.3 1173.7,467.1 1171.8,466.3" fill="#747382"/>
<polygon points="1174.7,459.1 1177.2,460.2 1178,469.1 1175.5,467.9" fill="#747382"/>
<polygon points="1170.1,478.6 1180.6,483.6 1181.1,488.6 1170.6,483.6" fill="#43484a"/>
<polygon points="1170.6,483.6 1181.1,488.6 1183.4,514.7 1172.9,509.3" fill="#1c1e1f"/>
<polygon points="1172.3,485.7 1179.9,489.3 1180.2,493.3 1172.7,489.6" fill="#aea39f"/>
<polygon points="1174.3,493.3 1176.1,494.2 1176.9,503.4 1175.1,502.5" fill="#747382"/>
<polygon points="1177.9,495.1 1180.4,496.4 1181.2,505.6 1178.7,504.4" fill="#747382"/>
<polyline points="1162.1,391.8 1172.9,508.5" fill="none" stroke="#5c2410" stroke-width="0.4"/>
<polyline points="1172.9,395.6 1183.3,513.9" fill="none" stroke="#5c2410" stroke-width="0.4"/>
<polygon points="1176.4,396.9 1179.1,397.8 1189.2,517 1186.7,515.7" fill="#b9552c"/>
<polygon points="1179.1,398.7 1190.3,402.7 1192.1,424.3 1181,420" fill="#363b3c"/>
<polygon points="1181,420 1192.1,424.3 1194.1,449.1 1183,444.4" fill="#1c1e1f"/>
<polygon points="1182.8,421.9 1190.8,425 1191.1,428.7 1183.1,425.6" fill="#b2a7a3"/>
<polygon points="1184.6,429.1 1186.7,429.9 1187.4,438.9 1185.4,438" fill="#787788"/>
<polygon points="1188.5,430.6 1191.3,431.7 1192,440.7 1189.3,439.6" fill="#787788"/>
<polygon points="1183.6,450.5 1194.6,455.3 1195,460.2 1184,455.4" fill="#43484a"/>
<polygon points="1184,455.4 1195,460.2 1197,485.7 1186.1,480.6" fill="#1c1e1f"/>
<polygon points="1185.8,457.4 1193.7,460.9 1194.1,464.7 1186.1,461.3" fill="#b2a7a3"/>
<polygon points="1187.7,464.8 1189.7,465.8 1190.4,475 1188.4,474.1" fill="#787788"/>
<polygon points="1191.5,466.6 1194.2,467.8 1195,477.1 1192.3,475.9" fill="#787788"/>
<polygon points="1186.6,486.5 1197.5,491.7 1197.9,496.8 1187.1,491.6" fill="#43484a"/>
<polygon points="1187.1,491.6 1197.9,496.8 1200.1,523.4 1189.3,517.8" fill="#1c1e1f"/>
<polygon points="1188.9,493.7 1196.7,497.5 1197,501.5 1189.2,497.7" fill="#b2a7a3"/>
<polygon points="1190.7,501.5 1192.7,502.5 1193.5,512.1 1191.5,511.1" fill="#787788"/>
<polygon points="1194.6,503.4 1197.2,504.7 1198,514.4 1195.3,513" fill="#787788"/>
<polyline points="1179.1,397.8 1189.2,517" fill="none" stroke="#5c2410" stroke-width="0.4"/>
<polyline points="1190.3,401.8 1200,522.6" fill="none" stroke="#5c2410" stroke-width="0.4"/>
<polygon points="1194,403.1 1196.8,404.1 1206.3,525.8 1203.7,524.4" fill="#b9552c"/>
<polygon points="1196.8,405 1208.2,409.1 1209.8,431.1 1198.5,426.7" fill="#363b3c"/>
<polygon points="1198.5,426.7 1209.8,431.1 1211.7,456.4 1200.5,451.7" fill="#1c1e1f"/>
<polygon points="1200.4,428.7 1208.5,431.8 1208.8,435.7 1200.7,432.5" fill="#b5aba7"/>
<polygon points="1202.1,436 1204.3,436.8 1205,446.3 1202.8,445.4" fill="#7d7c8e"/>
<polygon points="1206.1,437.6 1208.9,438.7 1209.6,448.2 1206.8,447" fill="#7d7c8e"/>
<polygon points="1201,458 1212.2,462.8 1212.5,467.8 1201.3,462.9" fill="#43484a"/>
<polygon points="1201.3,462.9 1212.5,467.8 1214.4,493.9 1203.4,488.7" fill="#1c1e1f"/>
<polygon points="1203.2,465 1211.3,468.5 1211.5,472.5 1203.5,468.9" fill="#b5aba7"/>
<polygon points="1204.9,472.5 1207.1,473.5 1207.8,483.2 1205.7,482.2" fill="#7d7c8e"/>
<polygon points="1208.9,474.3 1211.7,475.5 1212.4,485.3 1209.6,484" fill="#7d7c8e"/>
<polygon points="1203.8,494.7 1214.9,500 1215.3,505.2 1204.2,499.9" fill="#43484a"/>
<polygon points="1204.2,499.9 1215.3,505.2 1217.2,532.3 1206.3,526.6" fill="#1c1e1f"/>
<polygon points="1206.1,502.1 1214,505.9 1214.3,510 1206.4,506.1" fill="#b5aba7"/>
<polygon points="1207.8,509.9 1209.9,511 1210.7,521.1 1208.6,520" fill="#7d7c8e"/>
<polygon points="1211.7,511.9 1214.4,513.2 1215.2,523.4 1212.5,522" fill="#7d7c8e"/>
<polyline points="1196.8,404.1 1206.3,525.8" fill="none" stroke="#5c2410" stroke-width="0.4"/>
<polyline points="1208.1,408.1 1217.2,531.5" fill="none" stroke="#5c2410" stroke-width="0.4"/>
<polygon points="1213.9,410.1 1215.5,410.7 1224.3,535.1 1222.6,534.3" fill="#b9552c"/>
<polygon points="1215.6,411.7 1221,413.6 1222.5,436 1217.2,433.9" fill="#363b3c"/>
<polygon points="1217.2,433.9 1222.5,436 1224.3,461.7 1219,459.5" fill="#1c1e1f"/>
<polygon points="1218.1,435.5 1222,437 1222.2,440.9 1218.4,439.4" fill="#b9afac"/>
<polygon points="1219.9,443 1222,443.9 1222.7,453.7 1220.5,452.9" fill="#828294"/>
<polygon points="1219.4,465.9 1224.7,468.1 1226.8,499.7 1221.6,497.2" fill="#363b3c"/>
<polygon points="1222,503.4 1227.3,505.9 1227.6,511.2 1222.4,508.7" fill="#43484a"/>
<polygon points="1222.4,508.7 1227.6,511.2 1229.5,538.6 1224.3,536" fill="#1c1e1f"/>
<polygon points="1223.3,510.4 1227.1,512.3 1227.4,516.4 1223.6,514.6" fill="#b9afac"/>
<polygon points="1225.1,518.5 1227.2,519.5 1227.9,530.1 1225.8,529" fill="#828294"/>
<polyline points="1215.5,410.7 1224.3,535.1" fill="none" stroke="#5c2410" stroke-width="0.4"/>
<polyline points="1220.9,412.7 1229.4,537.8" fill="none" stroke="#5c2410" stroke-width="0.4"/>
<polygon points="1228,415.2 1231.9,416.6 1239.9,543.3 1236.2,541.3" fill="#b9552c"/>
<polygon points="1232,417.5 1250.1,423.9 1251.4,447.1 1233.4,440.2" fill="#363b3c"/>
<polygon points="1233.4,440.2 1251.4,447.1 1252.8,473.7 1235.1,466.2" fill="#1c1e1f"/>
<polygon points="1236.3,442.6 1249.3,447.6 1249.5,451.6 1236.6,446.6" fill="#bdb3af"/>
<polygon points="1238.3,450.3 1242.1,451.8 1242.7,462.1 1238.9,460.6" fill="#87869a"/>
<polygon points="1244.8,452.9 1249.5,454.7 1250.1,465.2 1245.4,463.3" fill="#87869a"/>
<polygon points="1235.5,472.7 1253.2,480.3 1253.5,485.6 1235.8,477.9" fill="#43484a"/>
<polygon points="1235.8,477.9 1253.5,485.6 1255,512.9 1237.5,504.7" fill="#1c1e1f"/>
<polygon points="1238.7,480.5 1251.4,486 1251.6,490.2 1238.9,484.5" fill="#bdb3af"/>
<polygon points="1240.6,488.5 1244.4,490.1 1245,500.7 1241.3,499" fill="#87869a"/>
<polygon points="1247.1,491.3 1251.7,493.4 1252.3,504.1 1247.7,502" fill="#87869a"/>
<polygon points="1237.9,510.9 1255.4,519.3 1255.7,524.8 1238.2,516.3" fill="#43484a"/>
<polygon points="1238.2,516.3 1255.7,524.8 1257.2,553.1 1240,544.1" fill="#1c1e1f"/>
<polygon points="1241.1,519.1 1253.6,525.2 1253.9,529.4 1241.3,523.3" fill="#bdb3af"/>
<polygon points="1243,527.4 1246.7,529.2 1247.3,540.2 1243.7,538.3" fill="#87869a"/>
<polygon points="1249.4,530.5 1253.9,532.8 1254.5,543.9 1250,541.6" fill="#87869a"/>
<polyline points="1231.9,416.6 1239.9,543.3" fill="none" stroke="#5c2410" stroke-width="0.4"/>
<polyline points="1250,423 1257.2,552.2" fill="none" stroke="#5c2410" stroke-width="0.4"/>
<polygon points="1253.1,424.1 1256.7,425.3 1263.6,555.5 1260.1,553.7" fill="#b9552c"/>
<polygon points="1256.8,426.3 1272.6,431.9 1273.7,455.7 1258,449.7" fill="#363b3c"/>
<polygon points="1258,449.7 1273.7,455.7 1274.9,482.9 1259.4,476.4" fill="#1c1e1f"/>
<polygon points="1260.5,452 1271.8,456.3 1272,460.4 1260.8,456" fill="#c2b8b5"/>
<polygon points="1262.1,459.7 1265.6,461.1 1266.1,472.1 1262.6,470.6" fill="#8d8da2"/>
<polygon points="1267.9,462 1272,463.7 1272.5,474.7 1268.4,473" fill="#8d8da2"/>
<polygon points="1259.8,483.1 1275.2,489.7 1275.5,495.1 1260,488.4" fill="#43484a"/>
<polygon points="1260,488.4 1275.5,495.1 1276.7,523.1 1261.5,515.9" fill="#1c1e1f"/>
<polygon points="1262.5,490.9 1273.6,495.7 1273.8,499.9 1262.8,495.1" fill="#c2b8b5"/>
<polygon points="1264,498.9 1267.5,500.4 1268.1,511.7 1264.6,510.1" fill="#8d8da2"/>
<polygon points="1269.8,501.4 1273.8,503.2 1274.4,514.6 1270.3,512.7" fill="#8d8da2"/>
<polygon points="1261.8,522.4 1277,529.6 1277.3,535.2 1262.1,527.9" fill="#43484a"/>
<polygon points="1262.1,527.9 1277.3,535.2 1278.6,564.2 1263.6,556.4" fill="#1c1e1f"/>
<polygon points="1264.6,530.5 1275.5,535.8 1275.7,540.2 1264.8,534.8" fill="#c2b8b5"/>
<polygon points="1266.1,538.8 1269.5,540.5 1270,552.1 1266.7,550.4" fill="#8d8da2"/>
<polygon points="1271.7,541.6 1275.7,543.6 1276.3,555.3 1272.3,553.3" fill="#8d8da2"/>
<polyline points="1256.7,425.3 1263.6,555.5" fill="none" stroke="#5c2410" stroke-width="0.4"/>
<polyline points="1272.5,430.9 1278.6,563.3" fill="none" stroke="#5c2410" stroke-width="0.4"/>
<polygon points="1275.3,431.9 1279.3,433.3 1285,566.6 1281.2,564.7" fill="#b9552c"/>
<polygon points="1279.4,434.4 1297.4,440.7 1298.2,465.1 1280.4,458.3" fill="#363b3c"/>
<polygon points="1280.4,458.3 1298.2,465.1 1299.2,493.1 1281.6,485.7" fill="#1c1e1f"/>
<polygon points="1283.2,460.8 1296.1,465.7 1296.2,469.9 1283.4,464.9" fill="#c7bdbb"/>
<polygon points="1284.6,468.7 1288.8,470.3 1289.3,481.9 1285.1,480.2" fill="#9394aa"/>
<polygon points="1291.3,471.3 1296.2,473.2 1296.6,484.9 1291.8,482.9" fill="#9394aa"/>
<polygon points="1281.9,492.6 1299.4,500.1 1299.6,505.6 1282.1,498" fill="#43484a"/>
<polygon points="1282.1,498 1299.6,505.6 1300.6,534.3 1283.3,526.1" fill="#1c1e1f"/>
<polygon points="1284.9,500.6 1297.5,506.1 1297.7,510.5 1285.1,504.9" fill="#c7bdbb"/>
<polygon points="1286.3,508.8 1290.4,510.6 1290.9,522.5 1286.8,520.6" fill="#9394aa"/>
<polygon points="1292.9,511.7 1297.6,513.8 1298.1,525.8 1293.3,523.6" fill="#9394aa"/>
<polygon points="1283.6,532.7 1300.8,541 1301,546.7 1283.8,538.4" fill="#43484a"/>
<polygon points="1283.8,538.4 1301,546.7 1302.1,576.4 1285,567.5" fill="#1c1e1f"/>
<polygon points="1286.6,541.2 1299,547.2 1299.2,551.7 1286.8,545.6" fill="#c7bdbb"/>
<polygon points="1288,549.6 1292,551.7 1292.5,563.9 1288.5,561.9" fill="#9394aa"/>
<polygon points="1294.4,552.9 1299.1,555.2 1299.5,567.5 1294.9,565.2" fill="#9394aa"/>
<polyline points="1279.3,433.3 1285,566.6" fill="none" stroke="#5c2410" stroke-width="0.4"/>
<polyline points="1297.3,439.7 1302,575.5" fill="none" stroke="#5c2410" stroke-width="0.4"/>
<polygon points="1299.4,440.5 1301.9,441.4 1306.4,577.7 1304,576.5" fill="#b9552c"/>
<polygon points="1302,442.4 1311,445.6 1311.7,470.3 1302.8,466.9" fill="#363b3c"/>
<polygon points="1302.8,466.9 1311.7,470.3 1312.5,498.7 1303.7,495" fill="#1c1e1f"/>
<polygon points="1304.2,468.9 1310.6,471.3 1310.8,475.6 1304.4,473.1" fill="#cbc2c0"/>
<polygon points="1304.9,476.7 1307.1,477.6 1307.5,489.7 1305.3,488.8" fill="#999ab2"/>
<polygon points="1308.3,478.1 1310.8,479 1311.1,491.2 1308.7,490.2" fill="#999ab2"/>
<polygon points="1303.9,502 1312.7,505.8 1312.8,511.4 1304.1,507.6" fill="#43484a"/>
<polygon points="1304.1,507.6 1312.8,511.4 1313.7,540.4 1305,536.3" fill="#1c1e1f"/>
<polygon points="1305.5,509.6 1311.8,512.4 1312,516.8 1305.7,514" fill="#cbc2c0"/>
<polygon points="1306.2,517.7 1308.4,518.6 1308.8,531 1306.6,530" fill="#999ab2"/>
<polygon points="1309.6,519.2 1312,520.2 1312.3,532.7 1309.9,531.6" fill="#999ab2"/>
<polygon points="1305.3,543.1 1313.9,547.2 1314.9,583 1306.4,578.6" fill="#363b3c"/>
<polyline points="1301.9,441.4 1306.4,577.7" fill="none" stroke="#5c2410" stroke-width="0.4"/>
<polyline points="1310.9,444.5 1314.9,582.1" fill="none" stroke="#5c2410" stroke-width="0.4"/>
<polygon points="1313.6,445.5 1317.7,446.9 1321.3,585.4 1317.4,583.4" fill="#b9552c"/>
<polygon points="1317.7,448 1335.7,454.4 1336.2,479.8 1318.4,472.9" fill="#363b3c"/>
<polygon points="1318.4,472.9 1336.2,479.8 1336.7,508.8 1319.1,501.5" fill="#1c1e1f"/>
<polygon points="1321.2,475.4 1334,480.4 1334.1,484.8 1321.3,479.8" fill="#cfc6c4"/>
<polygon points="1322.2,483.5 1326.7,485.3 1327,497.9 1322.5,496.1" fill="#9d9fb7"/>
<polygon points="1329,486.3 1334,488.2 1334.2,500.9 1329.3,498.9" fill="#9d9fb7"/>
<polygon points="1319.3,508.6 1336.8,516.1 1336.9,521.8 1319.5,514.2" fill="#43484a"/>
<polygon points="1319.5,514.2 1336.9,521.8 1337.5,551.5 1320.2,543.5" fill="#1c1e1f"/>
<polygon points="1322.2,516.9 1334.8,522.4 1334.9,526.9 1322.4,521.4" fill="#cfc6c4"/>
<polygon points="1323.2,525.2 1327.6,527.2 1327.9,540.1 1323.5,538" fill="#9d9fb7"/>
<polygon points="1329.9,528.2 1334.8,530.4 1335.1,543.4 1330.2,541.1" fill="#9d9fb7"/>
<polygon points="1320.4,550.3 1337.6,558.5 1337.7,564.5 1320.5,556.1" fill="#43484a"/>
<polygon points="1320.5,556.1 1337.7,564.5 1338.2,595.2 1321.3,586.4" fill="#1c1e1f"/>
<polygon points="1323.3,559 1335.6,565 1335.7,569.6 1323.4,563.6" fill="#cfc6c4"/>
<polygon points="1324.2,567.6 1328.6,569.8 1328.9,583.1 1324.5,580.9" fill="#9d9fb7"/>
<polygon points="1330.8,570.9 1335.6,573.3 1335.9,586.7 1331.1,584.2" fill="#9d9fb7"/>
<polyline points="1317.7,446.9 1321.3,585.4" fill="none" stroke="#5c2410" stroke-width="0.4"/>
<polyline points="1335.7,453.3 1338.2,594.2" fill="none" stroke="#5c2410" stroke-width="0.4"/>
<polygon points="1353.7,459.7 1358.3,461.3 1359.4,605.2 1355.1,603" fill="#b9552c"/>
<polygon points="1358.3,462.4 1378.6,469.6 1378.6,496.1 1358.5,488.4" fill="#363b3c"/>
<polygon points="1358.5,488.4 1378.6,496.1 1378.5,526.4 1358.8,518.1" fill="#1c1e1f"/>
<polygon points="1361.7,491.1 1376.1,496.7 1376.1,501.3 1361.7,495.6" fill="#d7cfcd"/>
<polygon points="1362.1,499.4 1367.7,501.6 1367.7,515.3 1362.2,513" fill="#a8aac5"/>
<polygon points="1370.1,502.5 1375.9,504.8 1375.9,518.7 1370.1,516.3" fill="#a8aac5"/>
<polygon points="1358.8,525.5 1378.5,533.9 1378.5,539.9 1358.9,531.4" fill="#43484a"/>
<polygon points="1358.9,531.4 1378.5,539.9 1378.5,570.8 1359.1,561.7" fill="#1c1e1f"/>
<polygon points="1362,534.2 1376.1,540.4 1376.1,545.1 1362,538.8" fill="#d7cfcd"/>
<polygon points="1362.4,542.7 1367.8,545.1 1367.9,559.1 1362.5,556.7" fill="#a8aac5"/>
<polygon points="1370.2,546.2 1375.9,548.7 1375.9,562.8 1370.2,560.2" fill="#a8aac5"/>
<polygon points="1359.1,568.8 1378.5,578 1378.5,584.2 1359.2,574.9" fill="#43484a"/>
<polygon points="1359.2,574.9 1378.5,584.2 1378.4,616 1359.4,606.2" fill="#1c1e1f"/>
<polygon points="1362.2,577.9 1376.1,584.6 1376.1,589.5 1362.3,582.7" fill="#d7cfcd"/>
<polygon points="1362.7,586.7 1368,589.3 1368,603.8 1362.8,601.1" fill="#a8aac5"/>
<polygon points="1370.3,590.4 1375.9,593.2 1375.9,607.8 1370.3,604.9" fill="#a8aac5"/>
<polyline points="1358.3,461.3 1359.4,605.2" fill="none" stroke="#5c2410" stroke-width="0.4"/>
<polyline points="1378.6,468.5 1378.4,615.1" fill="none" stroke="#5c2410" stroke-width="0.4"/>
<polygon points="1384.5,470.6 1387.6,471.7 1386.8,619.4 1383.9,617.9" fill="#b9552c"/>
<polygon points="1387.6,472.8 1398.9,476.8 1398.6,503.8 1387.4,499.5" fill="#363b3c"/>
<polygon points="1387.4,499.5 1398.6,503.8 1398.3,534.7 1387.3,530" fill="#1c1e1f"/>
<polygon points="1389.2,501.7 1397.2,504.9 1397.2,509.5 1389.2,506.4" fill="#d8d0ce"/>
<polygon points="1389.4,510.2 1392.5,511.4 1392.4,525.5 1389.3,524.2" fill="#a9abc6"/>
<polygon points="1393.8,511.9 1397,513.2 1396.9,527.3 1393.7,526" fill="#a9abc6"/>
<polygon points="1387.2,537.6 1398.2,542.3 1398.1,548.4 1387.2,543.7" fill="#43484a"/>
<polygon points="1387.2,543.7 1398.1,548.4 1397.8,579.8 1387.1,574.8" fill="#1c1e1f"/>
<polygon points="1388.9,546 1396.8,549.4 1396.8,554.2 1388.9,550.7" fill="#d8d0ce"/>
<polygon points="1389.1,554.6 1392.1,555.9 1392,570.3 1389,568.9" fill="#a9abc6"/>
<polygon points="1393.4,556.5 1396.6,557.9 1396.5,572.4 1393.3,570.9" fill="#a9abc6"/>
<polygon points="1387,582.1 1397.7,587.2 1397.7,593.5 1387,588.3" fill="#43484a"/>
<polygon points="1387,588.3 1397.7,593.5 1397.3,625.9 1386.8,620.4" fill="#1c1e1f"/>
<polygon points="1388.7,590.8 1396.4,594.5 1396.3,599.4 1388.6,595.6" fill="#d8d0ce"/>
<polygon points="1388.8,599.6 1391.8,601.1 1391.7,615.9 1388.7,614.4" fill="#a9abc6"/>
<polygon points="1393.1,601.7 1396.2,603.3 1396,618.1 1392.9,616.5" fill="#a9abc6"/>
<polyline points="1387.6,471.7 1386.8,619.4" fill="none" stroke="#5c2410" stroke-width="0.4"/>
<polyline points="1398.9,475.7 1397.3,624.9" fill="none" stroke="#5c2410" stroke-width="0.4"/>
<polyline points="1056.8,373.1 1418.4,513" fill="none" stroke="#8c3c1c" stroke-width="0.45"/>
<polyline points="1387.2,470.7 1386.4,620.6" fill="none" stroke="#8c3c1c" stroke-width="0.45"/>
<polygon points="1058.6,392.3 1417.8,542.8 1417.7,548.8 1059.1,396.2" fill="#fbfbee" stroke="#6a6a60" stroke-width="0.4"/>
<polygon points="1059.1,396.2 1417.7,548.8 1417.7,550.5 1059.3,397.3" fill="#8c8c80"/>
<polygon points="1062.8,422.7 1416.9,588.8 1416.8,594.5 1063.3,426.5" fill="#fbfbee" stroke="#6a6a60" stroke-width="0.4"/>
<polygon points="1063.3,426.5 1416.8,594.5 1416.8,596.1 1063.4,427.6" fill="#8c8c80"/>
<polygon points="1103,446 1120,453 1120,457 1103,450.5" fill="#2a2c2e" stroke="#111" stroke-width="0.4"/>
<polygon points="1103,446 1107,443.8 1123.8,451 1120,453" fill="#55586a" stroke="#222" stroke-width="0.4"/>
<polygon points="1120,453 1123.8,451 1123.8,455 1120,457" fill="#3a3c40" stroke="#111" stroke-width="0.3"/>
<polygon points="1096.3,484.6 1115.9,473 1125.6,478 1125.6,486 1108.5,498 1096.3,492" fill="#5d5f61" stroke="#333" stroke-width="0.4"/>
<polygon points="1096.3,484.6 1115.9,473 1115.9,478.5 1108.5,490 1096.3,492" fill="#6a6c6e"/>
<polyline points="1101,489 1110,483" fill="none" stroke="#c0c0c0" stroke-width="0.6"/>
<polyline points="1100,492 1106,488" fill="none" stroke="#b0b0b0" stroke-width="0.6"/>
<polyline points="1110,492 1124,482" fill="none" stroke="#9a9a9a" stroke-width="0.5"/>
<polygon points="1419,482 1470,456 1472,399 1476,399 1683,311 1683,437 1607,494 1588.5,485 1588.5,474 1574,481 1558,493 1558,531 1416,636" fill="#f58d5f" stroke="#6b2a12" stroke-width="0.7"/>
<polygon points="1681,345 1696,338.5 1690,417 1684,436 1679,440" fill="#f58d5f" stroke="#6b2a12" stroke-width="0.6"/>
<polyline points="1684,352 1682,420" fill="none" stroke="#8c3c1c" stroke-width="0.5" stroke-dasharray="3 2"/>
<polyline points="1687,350.7 1685,418" fill="none" stroke="#8c3c1c" stroke-width="0.5" stroke-dasharray="3 2"/>
<polyline points="1690,349.4 1688,416" fill="none" stroke="#8c3c1c" stroke-width="0.5" stroke-dasharray="3 2"/>
<polyline points="1693,348.1 1691,414" fill="none" stroke="#8c3c1c" stroke-width="0.5" stroke-dasharray="3 2"/>
<polygon points="1590,462 1607,469 1607,494 1588.5,485" fill="#e0784a" stroke="#6b2a12" stroke-width="0.4"/>
<polygon points="1478.4,418.3 1493.1,411.7 1490.3,456 1475.8,463.5" fill="#1c1e1f" stroke="#5c2410" stroke-width="0.5"/>
<polygon points="1478.4,418.3 1493.1,411.7 1491.7,434.3 1477.1,441.4" fill="#3c4144"/>
<polygon points="1478.1,443.9 1479.4,443.2 1478.5,459.2 1477.1,459.9" fill="#c4a69c"/>
<polygon points="1498.1,409.4 1512.4,402.9 1509.2,446.1 1495.1,453.4" fill="#1c1e1f" stroke="#5c2410" stroke-width="0.5"/>
<polygon points="1498.1,409.4 1512.4,402.9 1510.8,425 1496.6,431.9" fill="#3c4144"/>
<polygon points="1497.5,434.3 1498.9,433.6 1497.8,449.2 1496.5,449.9" fill="#c4a69c"/>
<polygon points="1516.7,401 1530.7,394.7 1527.1,436.7 1513.4,443.9" fill="#1c1e1f" stroke="#5c2410" stroke-width="0.5"/>
<polygon points="1516.7,401 1530.7,394.7 1528.9,416.1 1515,422.9" fill="#3c4144"/>
<polygon points="1516,425.2 1517.3,424.5 1516.2,439.7 1514.8,440.4" fill="#c4a69c"/>
<polygon points="1474.3,472.1 1480.2,469 1478,505.9 1472.2,509.3" fill="#1c1e1f"/>
<polygon points="1474.7,476.2 1475.8,475.6 1474.2,503.8 1473.2,504.4" fill="#c4a69c"/>
<polygon points="1477,475 1478,474.4 1476.4,502.5 1475.4,503.1" fill="#c4a69c"/>
<polygon points="1492.3,460.6 1504.9,453.9 1501.6,499.2 1489.3,506.7" fill="#3c4144" stroke="#5c2410" stroke-width="0.4"/>
<polygon points="1517.1,446.5 1522.5,443.6 1520.5,468.1 1515.2,471.1" fill="#1c1e1f"/>
<polygon points="1517.5,449.1 1518.5,448.6 1517,467.3 1516.1,467.8" fill="#c4a69c"/>
<polygon points="1519.6,448 1520.5,447.5 1519,466.1 1518.1,466.7" fill="#c4a69c"/>
<polygon points="1470.8,526.7 1476.4,523.2 1474.8,551.1 1469.2,554.9" fill="#1c1e1f"/>
<polygon points="1471.3,529.6 1472.3,529 1471.1,550.4 1470.1,551" fill="#c4a69c"/>
<polygon points="1473.4,528.3 1474.4,527.7 1473.2,549 1472.2,549.6" fill="#c4a69c"/>
<polygon points="1486.3,517 1498.2,509.6 1496.2,537.7 1484.5,545.6" fill="#1c1e1f"/>
<polygon points="1487.5,519.5 1489.7,518.2 1488.2,539.8 1486.1,541.2" fill="#c4a69c"/>
<polygon points="1492,516.7 1494.1,515.4 1492.7,536.9 1490.6,538.3" fill="#c4a69c"/>
<polygon points="1486.3,517 1498.2,509.6 1497.8,515.5 1486,522.9" fill="#3c4144"/>
<polygon points="1503.6,506.3 1514.3,499.6 1512.1,527 1501.5,534.1" fill="#1c1e1f"/>
<polygon points="1504.6,508.8 1506.5,507.6 1504.9,528.7 1503,529.9" fill="#c4a69c"/>
<polygon points="1508.7,506.3 1510.6,505 1509,526 1507.1,527.3" fill="#c4a69c"/>
<polygon points="1503.6,506.3 1514.3,499.6 1513.8,505.3 1503.1,512" fill="#3c4144"/>
<polygon points="1520.7,487.6 1527.4,483.5 1524.2,520.6 1517.6,525.1" fill="#3c4144"/>
<polygon points="1461.1,574.1 1468.9,568.6 1467.6,592.8 1459.8,598.5" fill="#1c1e1f"/>
<polygon points="1479.4,560.4 1486.1,555.8 1484.5,580.3 1477.9,585.2" fill="#1c1e1f"/>
<polygon points="1480,562.8 1481.2,562 1480,580.7 1478.8,581.6" fill="#c4a69c"/>
<polygon points="1482.5,561 1483.7,560.2 1482.5,578.9 1481.3,579.8" fill="#c4a69c"/>
<polygon points="1491.3,552.2 1498.1,547.4 1496.4,571.5 1489.6,576.5" fill="#1c1e1f"/>
<polygon points="1491.9,554.5 1493.1,553.7 1491.8,572.1 1490.6,573" fill="#c4a69c"/>
<polygon points="1494.5,552.7 1495.7,551.8 1494.4,570.2 1493.2,571.1" fill="#c4a69c"/>
<polygon points="1504.7,542.9 1511.8,538 1509.9,561.6 1502.9,566.8" fill="#3c4144"/>
<polygon points="1515,535.8 1523.4,529.9 1521.4,553.1 1513,559.3" fill="#1c1e1f"/>
<polygon points="1515.7,537.9 1517.2,536.8 1515.8,554.6 1514.3,555.7" fill="#c4a69c"/>
<polygon points="1518.9,535.6 1520.5,534.6 1519,552.3 1517.4,553.4" fill="#c4a69c"/>
<polygon points="1554,366.5 1555.6,365.8 1538.8,540.3 1537.3,541.4" fill="#c9633a"/>
<polygon points="1543.8,370.8 1554,366.5 1537.3,541.4 1527.8,548.4" fill="#3c4144" stroke="#5c2410" stroke-width="0.4"/>
<polygon points="1540.7,409.5 1549.9,405 1546.8,437.6 1537.7,442.5" fill="#1c1e1f"/>
<polygon points="1542,410.8 1543.8,409.9 1542.7,422.3 1540.8,423.3" fill="#c09a8c"/>
<polygon points="1545.7,408.9 1547.5,408 1546.4,420.5 1544.5,421.4" fill="#c09a8c"/>
<polygon points="1540.5,426.6 1542.4,425.6 1541.3,437.5 1539.5,438.5" fill="#c09a8c"/>
<polygon points="1544.2,424.7 1546,423.7 1544.9,435.5 1543.1,436.5" fill="#c09a8c"/>
<polygon points="1536.8,443 1547.7,437.1 1547.4,440.7 1536.5,446.7" fill="#15171a"/>
<polygon points="1534,484.7 1542.8,479.3 1540.6,502.8 1531.8,508.6" fill="#1c1e1f"/>
<polygon points="1534.8,486.9 1536.4,485.9 1534.7,504 1533.1,505" fill="#c4a69c"/>
<polygon points="1538.1,484.8 1539.7,483.8 1538,501.8 1536.5,502.8" fill="#c4a69c"/>
<polygon points="1530.2,526.9 1538.8,520.9 1537.2,538.1 1528.6,544.4" fill="#1c1e1f"/>
<polygon points="1531,528.3 1532.6,527.2 1531.4,540.4 1529.8,541.5" fill="#c4a69c"/>
<polygon points="1534.3,526 1535.9,524.9 1534.7,538 1533.1,539.1" fill="#c4a69c"/>
<polygon points="1569.4,360 1571,359.3 1556.5,498.8 1555,499.8" fill="#c9633a"/>
<polygon points="1559.9,364 1569.4,360 1555,499.8 1545.9,505.9" fill="#3c4144" stroke="#5c2410" stroke-width="0.4"/>
<polygon points="1556.5,401.8 1565.1,397.6 1561.8,429.4 1553.4,434" fill="#1c1e1f"/>
<polygon points="1557.7,403 1559.4,402.2 1558.2,414.4 1556.5,415.3" fill="#c09a8c"/>
<polygon points="1561.1,401.4 1562.9,400.5 1561.6,412.6 1559.9,413.5" fill="#c09a8c"/>
<polygon points="1556.2,418.5 1557.9,417.6 1556.7,429.1 1555,430.1" fill="#c09a8c"/>
<polygon points="1559.6,416.7 1561.3,415.8 1560.1,427.3 1558.4,428.2" fill="#c09a8c"/>
<polygon points="1552.5,434.5 1562.7,428.9 1562.4,432.5 1552.1,438.1" fill="#15171a"/>
<polygon points="1549.4,475.2 1557.6,470.1 1555.2,493.1 1547.1,498.4" fill="#1c1e1f"/>
<polygon points="1550.1,477.3 1551.6,476.4 1549.8,494 1548.4,495" fill="#c4a69c"/>
<polygon points="1553.2,475.4 1554.7,474.5 1552.9,492 1551.5,493" fill="#c4a69c"/>
<polygon points="1584.7,353.5 1586.3,352.8 1571.2,488.8 1569.7,489.9" fill="#c9633a"/>
<polygon points="1575.3,357.5 1584.7,353.5 1569.7,489.9 1560.6,496" fill="#3c4144" stroke="#5c2410" stroke-width="0.4"/>
<polygon points="1571.7,394.4 1580.3,390.2 1576.9,421.2 1568.4,425.8" fill="#1c1e1f"/>
<polygon points="1572.9,395.6 1574.6,394.7 1573.3,406.6 1571.6,407.5" fill="#c09a8c"/>
<polygon points="1576.3,393.9 1578,393.1 1576.8,404.9 1575,405.8" fill="#c09a8c"/>
<polygon points="1571.3,410.7 1573,409.8 1571.8,421 1570.1,422" fill="#c09a8c"/>
<polygon points="1574.7,408.9 1576.4,408 1575.2,419.2 1573.5,420.1" fill="#c09a8c"/>
<polygon points="1567.5,426.3 1577.8,420.7 1577.4,424.2 1567.1,429.8" fill="#15171a"/>
<polygon points="1564.2,466 1572.4,460.9 1569.9,483.3 1561.8,488.7" fill="#1c1e1f"/>
<polygon points="1564.9,468.1 1566.4,467.2 1564.5,484.4 1563.1,485.3" fill="#c4a69c"/>
<polygon points="1568,466.1 1569.5,465.2 1567.6,482.3 1566.2,483.3" fill="#c4a69c"/>
<polygon points="1597.8,348 1599.4,347.3 1583.7,480.3 1582.2,481.4" fill="#c9633a"/>
<polygon points="1588.3,352 1597.8,348 1582.2,481.4 1573.1,487.5" fill="#3c4144" stroke="#5c2410" stroke-width="0.4"/>
<polygon points="1584.7,388.1 1593.3,383.9 1589.7,414.2 1581.2,418.9" fill="#1c1e1f"/>
<polygon points="1585.8,389.2 1587.5,388.4 1586.2,400 1584.5,400.9" fill="#c09a8c"/>
<polygon points="1589.3,387.5 1591,386.7 1589.6,398.3 1587.9,399.2" fill="#c09a8c"/>
<polygon points="1584.2,404 1585.9,403.1 1584.6,414.1 1582.9,415" fill="#c09a8c"/>
<polygon points="1587.6,402.2 1589.3,401.3 1588,412.3 1586.3,413.2" fill="#c09a8c"/>
<polygon points="1580.3,419.3 1590.6,413.7 1590.2,417.1 1579.9,422.8" fill="#15171a"/>
<polygon points="1576.9,458.1 1585.1,453 1582.5,475 1574.4,480.4" fill="#1c1e1f"/>
<polygon points="1577.5,460.2 1579,459.3 1577.1,476.1 1575.6,477.1" fill="#c4a69c"/>
<polygon points="1580.7,458.2 1582.1,457.3 1580.2,474 1578.7,475" fill="#c4a69c"/>
<polygon points="1613.2,341.5 1614.8,340.8 1595,498.9 1593.4,500" fill="#c9633a"/>
<polygon points="1604.4,345.2 1613.2,341.5 1593.4,500 1585,506.2" fill="#3c4144" stroke="#5c2410" stroke-width="0.4"/>
<polygon points="1600.6,380.3 1608.5,376.4 1604.8,406 1597,410.3" fill="#1c1e1f"/>
<polygon points="1601.6,381.5 1603.2,380.7 1601.8,392 1600.3,392.8" fill="#c09a8c"/>
<polygon points="1604.8,379.9 1606.4,379.1 1605,390.4 1603.4,391.2" fill="#c09a8c"/>
<polygon points="1599.9,395.8 1601.5,395 1600.2,405.7 1598.6,406.6" fill="#c09a8c"/>
<polygon points="1603,394.2 1604.6,393.4 1603.3,404 1601.7,404.9" fill="#c09a8c"/>
<polygon points="1596.1,410.7 1605.7,405.5 1605.3,408.8 1595.7,414.1" fill="#15171a"/>
<polygon points="1592.4,448.5 1600,443.8 1597.4,465.1 1589.8,470.1" fill="#1c1e1f"/>
<polygon points="1593,450.5 1594.4,449.6 1592.4,466 1591.1,466.9" fill="#c4a69c"/>
<polygon points="1595.9,448.7 1597.3,447.8 1595.3,464.1 1593.9,465" fill="#c4a69c"/>
<polygon points="1587.8,486.7 1595.3,481.5 1593.4,497.1 1585.9,502.5" fill="#1c1e1f"/>
<polygon points="1588.5,488 1589.8,487.1 1588.4,499 1587,500" fill="#c4a69c"/>
<polygon points="1591.3,486 1592.7,485.1 1591.2,497 1589.9,497.9" fill="#c4a69c"/>
<polygon points="1625.6,336.3 1627.2,335.6 1606.9,490.1 1605.3,491.3" fill="#c9633a"/>
<polygon points="1617.6,339.6 1625.6,336.3 1605.3,491.3 1597.7,496.9" fill="#3c4144" stroke="#5c2410" stroke-width="0.4"/>
<polygon points="1613.7,373.9 1620.8,370.4 1617,399.3 1609.9,403.2" fill="#1c1e1f"/>
<polygon points="1614.6,375.1 1616,374.4 1614.6,385.5 1613.2,386.2" fill="#c09a8c"/>
<polygon points="1617.4,373.7 1618.8,373 1617.4,384 1616,384.7" fill="#c09a8c"/>
<polygon points="1612.8,389.1 1614.2,388.4 1612.9,398.9 1611.4,399.6" fill="#c09a8c"/>
<polygon points="1615.6,387.6 1617,386.9 1615.7,397.3 1614.3,398.1" fill="#c09a8c"/>
<polygon points="1609,403.7 1617.9,398.8 1617.5,402 1608.6,406.9" fill="#15171a"/>
<polygon points="1605.3,440.5 1612.1,436.3 1609.4,457.1 1602.6,461.6" fill="#1c1e1f"/>
<polygon points="1605.8,442.5 1607,441.8 1604.9,457.8 1603.7,458.6" fill="#c4a69c"/>
<polygon points="1608.4,440.9 1609.6,440.1 1607.5,456.1 1606.3,456.9" fill="#c4a69c"/>
<polygon points="1600.5,477.9 1607.3,473.2 1605.3,488.4 1598.5,493.3" fill="#1c1e1f"/>
<polygon points="1601.1,479.2 1602.3,478.3 1600.8,490 1599.6,490.9" fill="#c4a69c"/>
<polygon points="1603.6,477.4 1604.9,476.5 1603.4,488.2 1602.1,489" fill="#c4a69c"/>
<polygon points="1636.6,331.6 1638.2,330.9 1617.5,482.3 1615.9,483.5" fill="#c9633a"/>
<polygon points="1630.8,334.1 1636.6,331.6 1615.9,483.5 1610.3,487.6" fill="#3c4144" stroke="#5c2410" stroke-width="0.4"/>
<polygon points="1626.7,367.5 1631.7,365.1 1627.8,393.4 1622.9,396.1" fill="#1c1e1f"/>
<polygon points="1627.3,368.8 1628.3,368.4 1626.8,379.2 1625.8,379.7" fill="#c09a8c"/>
<polygon points="1629.3,367.9 1630.3,367.4 1628.8,378.2 1627.8,378.7" fill="#c09a8c"/>
<polygon points="1625.5,382.5 1626.4,382 1625.1,392.3 1624.1,392.8" fill="#c09a8c"/>
<polygon points="1627.4,381.5 1628.4,381 1627,391.2 1626.1,391.7" fill="#c09a8c"/>
<polygon points="1622,396.6 1628.7,392.9 1628.3,396 1621.6,399.7" fill="#15171a"/>
<polygon points="1618.1,432.5 1622.8,429.6 1620,450 1615.4,453.1" fill="#1c1e1f"/>
<polygon points="1618.4,434.6 1619.2,434.1 1617.1,449.7 1616.3,450.3" fill="#c4a69c"/>
<polygon points="1620.1,433.5 1621,433 1618.9,448.6 1618,449.1" fill="#c4a69c"/>
<polygon points="1613.3,469 1617.9,465.7 1615.9,480.7 1611.2,484.1" fill="#1c1e1f"/>
<polygon points="1613.6,470.4 1614.4,469.8 1612.9,481.2 1612,481.8" fill="#c4a69c"/>
<polygon points="1615.3,469.2 1616.2,468.6 1614.6,480 1613.8,480.6" fill="#c4a69c"/>
<polygon points="1646.4,327.5 1648,326.8 1626.9,475.3 1625.4,476.5" fill="#c9633a"/>
<polygon points="1640.3,330.1 1646.4,327.5 1625.4,476.5 1619.5,480.8" fill="#3c4144" stroke="#5c2410" stroke-width="0.4"/>
<polygon points="1636.2,362.9 1641.4,360.3 1637.5,388.1 1632.3,391" fill="#1c1e1f"/>
<polygon points="1636.8,364.2 1637.8,363.7 1636.3,374.3 1635.3,374.8" fill="#c09a8c"/>
<polygon points="1638.9,363.2 1639.9,362.6 1638.4,373.2 1637.4,373.7" fill="#c09a8c"/>
<polygon points="1634.9,377.6 1635.9,377.1 1634.5,387.1 1633.5,387.7" fill="#c09a8c"/>
<polygon points="1637,376.5 1638,376 1636.6,386 1635.6,386.6" fill="#c09a8c"/>
<polygon points="1631.4,391.4 1638.4,387.6 1638,390.7 1631,394.6" fill="#15171a"/>
<polygon points="1627.4,426.7 1632.4,423.6 1629.6,443.7 1624.6,447" fill="#1c1e1f"/>
<polygon points="1627.7,428.8 1628.6,428.2 1626.4,443.6 1625.5,444.2" fill="#c4a69c"/>
<polygon points="1629.6,427.6 1630.5,427 1628.3,442.3 1627.4,442.9" fill="#c4a69c"/>
<polygon points="1622.5,462.6 1627.4,459.1 1625.3,473.8 1620.4,477.4" fill="#1c1e1f"/>
<polygon points="1622.8,463.9 1623.7,463.3 1622.1,474.5 1621.2,475.2" fill="#c4a69c"/>
<polygon points="1624.7,462.6 1625.6,462 1624,473.2 1623.1,473.8" fill="#c4a69c"/>
<polygon points="1649.9,338.5 1655.9,335.8 1650.8,370.4 1644.9,373.5" fill="#1c1e1f" stroke="#5c2410" stroke-width="0.4"/>
<polygon points="1649.9,338.5 1655.9,335.8 1653.6,351.6 1647.6,354.5" fill="#3c4144"/>
<polygon points="1648.3,356.3 1649.5,355.7 1647.4,370.1 1646.2,370.7" fill="#c4a69c"/>
<polygon points="1650.5,355.2 1651.7,354.6 1649.6,369 1648.4,369.6" fill="#c4a69c"/>
<polygon points="1642.4,381.2 1647.3,378.5 1643.8,402.8 1638.9,405.7" fill="#1c1e1f"/>
<polygon points="1642.6,383.8 1643.5,383.3 1640.8,401.9 1639.9,402.4" fill="#c4a69c"/>
<polygon points="1644.5,382.8 1645.3,382.3 1642.7,400.8 1641.8,401.3" fill="#c4a69c"/>
<polygon points="1636.5,425.2 1642.4,421.5 1639.8,439.6 1633.9,443.6" fill="#1c1e1f"/>
<polygon points="1636.9,427 1638,426.3 1636,440.2 1634.9,440.9" fill="#c4a69c"/>
<polygon points="1639.2,425.6 1640.2,424.9 1638.2,438.7 1637.2,439.4" fill="#c4a69c"/>
<polygon points="1632.6,452.7 1638.5,448.7 1636,465.3 1630.2,469.5" fill="#1c1e1f"/>
<polygon points="1633,454.3 1634.1,453.5 1632.2,466.2 1631.2,467" fill="#c4a69c"/>
<polygon points="1635.2,452.7 1636.3,452 1634.5,464.6 1633.4,465.4" fill="#c4a69c"/>
<polygon points="1658.9,334.4 1664.7,331.8 1659.5,365.9 1653.8,368.9" fill="#1c1e1f" stroke="#5c2410" stroke-width="0.4"/>
<polygon points="1658.9,334.4 1664.7,331.8 1662.3,347.4 1656.6,350.2" fill="#3c4144"/>
<polygon points="1657.2,351.9 1658.4,351.3 1656.3,365.5 1655.1,366.1" fill="#c4a69c"/>
<polygon points="1659.4,350.9 1660.6,350.3 1658.5,364.4 1657.3,365" fill="#c4a69c"/>
<polygon points="1651.3,376.4 1656.1,373.9 1652.5,397.6 1647.8,400.4" fill="#1c1e1f"/>
<polygon points="1651.5,379 1652.3,378.5 1649.6,396.7 1648.8,397.2" fill="#c4a69c"/>
<polygon points="1653.3,378 1654.1,377.5 1651.4,395.7 1650.6,396.2" fill="#c4a69c"/>
<polygon points="1645.4,419.7 1651.1,416 1648.4,433.8 1642.7,437.7" fill="#1c1e1f"/>
<polygon points="1645.7,421.4 1646.8,420.7 1644.7,434.4 1643.7,435" fill="#c4a69c"/>
<polygon points="1647.9,420 1648.9,419.3 1646.9,432.9 1645.9,433.6" fill="#c4a69c"/>
<polygon points="1641.4,446.7 1647.1,442.7 1644.6,459 1638.9,463.2" fill="#1c1e1f"/>
<polygon points="1641.8,448.2 1642.8,447.5 1640.9,460 1639.9,460.7" fill="#c4a69c"/>
<polygon points="1643.9,446.7 1644.9,446 1643.1,458.4 1642.1,459.1" fill="#c4a69c"/>
<polygon points="1668.4,330.2 1674.2,327.6 1669,360.9 1663.2,363.9" fill="#1c1e1f" stroke="#5c2410" stroke-width="0.4"/>
<polygon points="1668.4,330.2 1674.2,327.6 1671.8,342.8 1666,345.6" fill="#3c4144"/>
<polygon points="1666.7,347.3 1667.9,346.7 1665.7,360.6 1664.5,361.2" fill="#c4a69c"/>
<polygon points="1668.9,346.2 1670.1,345.7 1667.9,359.5 1666.7,360.1" fill="#c4a69c"/>
<polygon points="1660.7,371.4 1665.5,368.8 1661.9,392.1 1657.1,394.9" fill="#1c1e1f"/>
<polygon points="1660.9,373.9 1661.7,373.4 1659,391.3 1658.1,391.8" fill="#c4a69c"/>
<polygon points="1662.7,372.9 1663.5,372.4 1660.8,390.2 1659.9,390.7" fill="#c4a69c"/>
<polygon points="1654.7,413.7 1660.4,410.1 1657.7,427.6 1652,431.4" fill="#1c1e1f"/>
<polygon points="1655.1,415.4 1656.1,414.8 1654.1,428.1 1653,428.8" fill="#c4a69c"/>
<polygon points="1657.2,414 1658.3,413.4 1656.2,426.7 1655.2,427.4" fill="#c4a69c"/>
<polygon points="1650.7,440.2 1656.4,436.3 1653.9,452.3 1648.2,456.4" fill="#1c1e1f"/>
<polygon points="1651.1,441.7 1652.1,441 1650.2,453.2 1649.2,454" fill="#c4a69c"/>
<polygon points="1653.2,440.2 1654.2,439.5 1652.4,451.7 1651.3,452.4" fill="#c4a69c"/>
<polyline points="1648,325.7 1625.2,480.1" fill="none" stroke="#8c3c1c" stroke-width="0.5"/>
<polyline points="1646.4,337.2 1681.3,321.7" fill="none" stroke="#8c3c1c" stroke-width="0.5"/>
<polyline points="1640.5,378.7 1675.2,360.3" fill="none" stroke="#8c3c1c" stroke-width="0.5"/>
<polyline points="1419.8,505 1474.6,474.4" fill="none" stroke="#8c3c1c" stroke-width="0.5"/>
<polyline points="1424,480 1421.5,633" fill="none" stroke="#8c3c1c" stroke-width="0.5"/>
<polyline points="1474.9,417.9 1538.4,389.4" fill="none" stroke="#8c3c1c" stroke-width="0.5"/>
<polyline points="1472.1,468.4 1534.3,435.6" fill="none" stroke="#8c3c1c" stroke-width="0.5"/>
<polygon points="1472,399 1477,399.5 1475.5,476 1471,475" fill="#f58d5f" stroke="#6b2a12" stroke-width="0.5"/>
<polygon points="1418,541.5 1692,374 1692,377.4 1418,548" fill="#fbfbee" stroke="#6a6a60" stroke-width="0.4"/>
<polygon points="1418,548 1692,377.4 1692,378.8 1418,550" fill="#77776c"/>
<polygon points="1416,588.5 1690,402 1690,405.2 1416,595" fill="#fbfbee" stroke="#6a6a60" stroke-width="0.4"/>
<polygon points="1416,595 1690,405.2 1690,406.6 1416,597" fill="#77776c"/>
<polygon points="1449,570 1497,542 1501,548 1452,579" fill="#2a2c2e" stroke="#111" stroke-width="0.5"/>
<polygon points="1449,570 1453,565 1500,538 1497,542" fill="#a4a6c4" stroke="#222" stroke-width="0.4"/>
<polygon points="1469.3,628.8 1485,598.5 1496.6,599.5 1473.2,631.7" fill="#4c4e50"/>
<polygon points="1477,593.7 1481,584 1496.6,588 1494.6,599.5 1485,598.5" fill="#5c5e60"/>
<polygon points="1453.7,624 1477,593.7 1485,598.5 1469.3,628.8" fill="#a4a6c2" stroke="#555" stroke-width="0.4"/>
<polyline points="1455,622.3 1470.2,627.1" fill="none" stroke="#55576a" stroke-width="0.7"/>
<polyline points="1457.6,619 1471.9,623.8" fill="none" stroke="#55576a" stroke-width="0.7"/>
<polyline points="1460.2,615.6 1473.7,620.4" fill="none" stroke="#55576a" stroke-width="0.7"/>
<polyline points="1462.8,612.2 1475.4,617" fill="none" stroke="#55576a" stroke-width="0.7"/>
<polyline points="1465.3,608.9 1477.2,613.6" fill="none" stroke="#55576a" stroke-width="0.7"/>
<polyline points="1467.9,605.5 1478.9,610.3" fill="none" stroke="#55576a" stroke-width="0.7"/>
<polyline points="1470.5,602.1 1480.6,606.9" fill="none" stroke="#55576a" stroke-width="0.7"/>
<polyline points="1473.1,598.8 1482.4,603.5" fill="none" stroke="#55576a" stroke-width="0.7"/>
<polyline points="1475.7,595.4 1484.1,600.2" fill="none" stroke="#55576a" stroke-width="0.7"/>
<polygon points="1626,445 1657,431 1658,438 1628,451" fill="#2a2c2e" stroke="#111" stroke-width="0.5"/>
<polygon points="1626,445 1632,439 1659,428 1657,431" fill="#a4a6c4" stroke="#222" stroke-width="0.4"/>
<polygon points="1630,480 1645,465 1656,462 1653,474 1642,488" fill="#8d9093" stroke="#555" stroke-width="0.4"/>
<polygon points="1636,470 1650,464 1652,471 1640,476" fill="#a9abc6"/>
<rect x="1277" y="568" width="4.5" height="5" rx="1" fill="#121314"/>
<rect x="1297" y="583" width="4.5" height="5" rx="1" fill="#121314"/>
<rect x="1331" y="601" width="4.5" height="5" rx="1" fill="#121314"/>
<rect x="1396.5" y="638.5" width="4.5" height="5" rx="1" fill="#121314"/>
<rect x="1438.5" y="627" width="4.5" height="5" rx="1" fill="#121314"/>
<rect x="1667" y="446" width="4.5" height="5" rx="1" fill="#121314"/>
<rect x="1623" y="483" width="4.5" height="5" rx="1" fill="#121314"/>
<polygon points="1054,353 1373.7,290.3 1373.7,299.7 1088,361" fill="#f48c5e" stroke="#6b2a12" stroke-width="0.7"/>
<polygon points="1373.7,290.3 1508.5,309.5 1508.5,320 1373.7,299.7" fill="#dd7446" stroke="#6b2a12" stroke-width="0.7"/>
<polyline points="1061,355.3 1373.7,293.6 1508.5,312.6" fill="none" stroke="#b8522a" stroke-width="0.45"/>
<polygon points="1088,361 1373.7,299.7 1509,320 1509,340 1442.4,465.6 1417,478.5" fill="#b0b2d4"/>
<polygon points="1054,353 1061,352 1088,361 1417,478.5 1419,482" fill="#c65a30" stroke="#6b2a12" stroke-width="0.5"/>
<polygon points="1417.5,477.3 1442.4,465.6 1465,454.6 1470,456 1419,482" fill="#c65a30" stroke="#6b2a12" stroke-width="0.5"/>
<polyline points="1250,338 1300,355 1385,330" fill="none" stroke="#c9a9a4" stroke-width="0.6" stroke-dasharray="2 2"/>
<polyline points="1130,358 1185,372 1330,332" fill="none" stroke="#c9b5c0" stroke-width="0.5" stroke-dasharray="1.5 2.5"/>
<polyline points="1185,372 1245,352" fill="none" stroke="#c9b5c0" stroke-width="0.5" stroke-dasharray="1.5 2.5"/>
<polyline points="1240,327.5 1300,316 1312,318" fill="none" stroke="#c9a9a4" stroke-width="0.6" stroke-dasharray="2 2"/>
<polyline points="1163,370.5 1262,346.5" fill="none" stroke="#151515" stroke-width="1.1"/>
<polyline points="1162.5,371 1162.5,365.5" fill="none" stroke="#151515" stroke-width="1.6"/>
<ellipse cx="1192" cy="358.5" rx="3.3" ry="1.5" fill="#8f907c" stroke="#6d6e60" stroke-width="0.5"/>
<ellipse cx="1219" cy="351.5" rx="3.3" ry="1.5" fill="#8f907c" stroke="#6d6e60" stroke-width="0.5"/>
<ellipse cx="1246" cy="345" rx="3.3" ry="1.5" fill="#8f907c" stroke="#6d6e60" stroke-width="0.5"/>
<ellipse cx="1272" cy="338.5" rx="3.3" ry="1.5" fill="#8f907c" stroke="#6d6e60" stroke-width="0.5"/>
<ellipse cx="1297" cy="333.5" rx="3.3" ry="1.5" fill="#8f907c" stroke="#6d6e60" stroke-width="0.5"/>
<ellipse cx="1188" cy="374" rx="3.3" ry="1.5" fill="#8f907c" stroke="#6d6e60" stroke-width="0.5"/>
<ellipse cx="1213" cy="382" rx="3.3" ry="1.5" fill="#8f907c" stroke="#6d6e60" stroke-width="0.5"/>
<ellipse cx="1236" cy="389.5" rx="3.3" ry="1.5" fill="#8f907c" stroke="#6d6e60" stroke-width="0.5"/>
<ellipse cx="1261" cy="397" rx="3.3" ry="1.5" fill="#8f907c" stroke="#6d6e60" stroke-width="0.5"/>
<ellipse cx="1288" cy="405.5" rx="3.3" ry="1.5" fill="#8f907c" stroke="#6d6e60" stroke-width="0.5"/>
<ellipse cx="1288" cy="420.5" rx="3.3" ry="1.5" fill="#8f907c" stroke="#6d6e60" stroke-width="0.5"/>
<ellipse cx="1314" cy="414.5" rx="3.3" ry="1.5" fill="#8f907c" stroke="#6d6e60" stroke-width="0.5"/>
<ellipse cx="1176" cy="370" rx="3.3" ry="1.5" fill="#8f907c" stroke="#6d6e60" stroke-width="0.5"/>
<polygon points="1204,352 1206,352 1206,361 1204,361" fill="#8e8e7e"/>
<polygon points="1230,359 1232,359 1232,368 1230,368" fill="#8e8e7e"/>
<polygon points="1262.3,346.8 1342.8,329.7 1343,355.1 1318,362.3 1318,368 1262.3,356" fill="#353a3e"/>
<polygon points="1276.9,343.7 1281.1,342.8 1281.1,361.8 1276.9,362.7" fill="#f6f6f2"/>
<polygon points="1289.7,341 1294.9,339.9 1294.9,358.9 1289.7,360" fill="#f6f6f2"/>
<polygon points="1307.7,337.2 1312,336.2 1312,355.2 1307.7,356.2" fill="#f6f6f2"/>
<polygon points="1324,333.7 1328.3,332.8 1328.3,351.8 1324,352.7" fill="#f6f6f2"/>
<polygon points="1338.6,330.6 1342.8,329.7 1342.8,348.7 1338.6,349.6" fill="#f6f6f2"/>
<polyline points="1262.3,346.8 1342.8,329.7" fill="none" stroke="#d8d8d0" stroke-width="1.0"/>
<polygon points="1284,356 1288,355.3 1288,357 1284,357.7" fill="#c4a69c"/>
<polygon points="1302,352.4 1306,351.7 1306,353.4 1302,354.1" fill="#c4a69c"/>
<polygon points="1321,348.6 1325,347.9 1325,349.6 1321,350.3" fill="#c4a69c"/>
<polygon points="1333,346.2 1337,345.5 1337,347.2 1333,347.9" fill="#c4a69c"/>
<polygon points="1253.7,351.1 1262.3,347.5 1321,362 1318,366.6" fill="#b9b9a8" stroke="#777" stroke-width="0.4"/>
<polygon points="1253.7,351.1 1318,366.6 1318,379.4 1253.7,362.3" fill="#fdfde2" stroke="#777" stroke-width="0.5"/>
<polygon points="1253.7,351.1 1257,350 1257,361.5 1253.7,362.3" fill="#ecebcc" stroke="#777" stroke-width="0.4"/>
<polygon points="1312,305.7 1358.3,311.7 1358.3,350.6 1343,355.1 1343,329.7 1312,336.2" fill="#d8713f" stroke="#6b2a12" stroke-width="0.6"/>
<polyline points="1315.5,306.5 1315.5,336" fill="none" stroke="#8c3c1c" stroke-width="0.5"/>
<polyline points="1338.6,309.5 1338.6,331" fill="none" stroke="#8c3c1c" stroke-width="0.5"/>
<polyline points="1355,311.5 1355,349" fill="none" stroke="#8c3c1c" stroke-width="0.5"/>
<polygon points="1358.3,311.7 1379.7,308.3 1379.7,343.4 1358.3,348.6" fill="#e27a4c" stroke="#6b2a12" stroke-width="0.6"/>
<polygon points="1360.8,315.2 1373.7,313 1373.7,344 1360.8,347" fill="#2a2a2a"/>
<polygon points="1362.6,316.5 1372.2,314.8 1372.2,329.5 1362.6,331.5" fill="#cf8f7c"/>
<polygon points="1362.6,333.5 1372.2,331.5 1372.2,343.2 1362.6,345.6" fill="#cf8f7c"/>
<polyline points="1376.5,309.5 1376.5,343.5" fill="none" stroke="#8c3c1c" stroke-width="0.5"/>
<polygon points="1312,305.7 1333.4,301.4 1379.7,308.3 1358.3,311.7" fill="#f48c5e" stroke="#6b2a12" stroke-width="0.6"/>
<polygon points="1317.5,305.6 1334,302.6 1374,308.4 1357.5,310.9" fill="#d8713f" stroke="#6b2a12" stroke-width="0.4"/>
<polygon points="1336,306 1345,304.4 1372,308.3 1358,310.3" fill="#b0b2d4"/>
<polygon points="1313.5,321 1320,319.8 1324,320.8 1324,336 1313.5,338" fill="#d9a48e" stroke="#777" stroke-width="0.5" fill-opacity="0.7"/>
<polygon points="1379.7,308.3 1509,320 1509,324 1463,333 1379.7,318" fill="#b0b2d4"/>
<polyline points="1383,312.5 1500,329" fill="none" stroke="#c9a9a4" stroke-width="0.6" stroke-dasharray="2 2"/>
<polyline points="1440,310 1404,322" fill="none" stroke="#c9a9a4" stroke-width="0.5" stroke-dasharray="2 2"/>
<ellipse cx="1396" cy="315.5" rx="2.8" ry="1.2" fill="#8f907c"/>
<ellipse cx="1409" cy="317.5" rx="2.8" ry="1.2" fill="#8f907c"/>
<ellipse cx="1433" cy="321.5" rx="2.8" ry="1.2" fill="#8f907c"/>
<ellipse cx="1456" cy="326.5" rx="2.8" ry="1.2" fill="#8f907c"/>
<polygon points="1379.7,316.9 1462.8,331.4 1428.5,346 1401.1,338.3 1379.7,343.4" fill="#353a3e"/>
<polygon points="1379.7,316.9 1392.5,319.1 1392.5,338.3 1379.7,343.4" fill="#f6f6f0" stroke="#999" stroke-width="0.4"/>
<polyline points="1379.7,330 1392.5,330.6" fill="none" stroke="#aaa" stroke-width="0.5"/>
<polygon points="1398.6,320.2 1402,320.8 1402,342.6 1398.6,342" fill="#f8f8e4"/>
<polygon points="1408.8,322 1412.3,322.6 1412.3,341 1408.8,340.4" fill="#f8f8e4"/>
<polygon points="1419.1,323.8 1423.4,324.5 1423.4,339.6 1419.1,338.8" fill="#f8f8e4"/>
<polygon points="1435.4,326.6 1439.7,327.4 1439.7,337 1435.4,336.3" fill="#f8f8e4"/>
<polygon points="1447.4,328.7 1451.7,329.5 1451.7,335.2 1447.4,334.4" fill="#f8f8e4"/>
<polyline points="1379.7,316.9 1462.8,331.4" fill="none" stroke="#e0e0d8" stroke-width="1.0"/>
<circle cx="1385.5" cy="314" r="1.3" fill="#111"/>
<polyline points="1385.5,314 1385.5,310.5" fill="none" stroke="#111" stroke-width="1.3"/>
<polygon points="1318,362.3 1475,399 1472,453 1465,454.6 1442.4,465.6 1400,451.7 1319.5,427" fill="#d8713f" stroke="#6b2a12" stroke-width="0.7"/>
<polyline points="1318.8,373 1474.3,411.5" fill="none" stroke="#7c3216" stroke-width="0.6"/>
<polyline points="1323,363.5 1324,428.3" fill="none" stroke="#7c3216" stroke-width="0.5"/>
<polygon points="1358.3,367.4 1401.1,353.7 1428.5,359.7 1542.2,322.7 1542.9,310.6 1556.8,306.2 1652.2,319 1476.5,396.6" fill="#b0b2d4"/>
<polygon points="1318,362.3 1401.1,338.3 1401.1,353.7 1358.3,367.4 1322.5,364.5" fill="#f48c5e" stroke="#6b2a12" stroke-width="0.6"/>
<polyline points="1322.5,364.5 1401.1,341.5" fill="none" stroke="#b8522a" stroke-width="0.45"/>
<polygon points="1401.1,338.3 1428.5,346 1428.5,359.7 1401.1,353.7" fill="#d8713f" stroke="#6b2a12" stroke-width="0.6"/>
<polygon points="1423.5,345 1428.5,346 1428.5,359.7 1423.5,358.6" fill="#e27a4c" stroke="#6b2a12" stroke-width="0.4"/>
<polygon points="1428.5,346 1542.2,311 1542.2,322.7 1428.5,359.7" fill="#f48c5e" stroke="#6b2a12" stroke-width="0.6"/>
<polyline points="1428.5,349 1542,313.8" fill="none" stroke="#b8522a" stroke-width="0.45"/>
<polygon points="1508.5,307.5 1513.3,307 1513.3,318.5 1508.5,320" fill="#f48c5e" stroke="#6b2a12" stroke-width="0.5"/>
<polygon points="1509.3,307 1556.8,294.5 1556.8,306.2 1542.9,310.6 1513.3,309.3" fill="#f48c5e" stroke="#6b2a12" stroke-width="0.5"/>
<polygon points="1509.3,307 1556.8,294.5 1556.8,296.7 1521.7,307 1542.9,310.6 1513.3,309.3" fill="#c65a30"/>
<polygon points="1513.3,309.5 1531,310.5 1513.3,317.5" fill="#d8713f" stroke="#6b2a12" stroke-width="0.4"/>
<polygon points="1557,294.6 1683.4,310.5 1652.2,319 1557,306.8" fill="#e07848" stroke="#6b2a12" stroke-width="0.6"/>
<polyline points="1557,297.8 1677,312.5" fill="none" stroke="#b8522a" stroke-width="0.45"/>
<polygon points="1318,362.3 1322.5,364.5 1358.3,367.4 1476.5,396.6 1476,399" fill="#c65a30" stroke="#6b2a12" stroke-width="0.4"/>
<polygon points="1476,399 1476.5,396.6 1652.2,319 1683.4,310.5" fill="#c65a30" stroke="#6b2a12" stroke-width="0.4"/>
<polygon points="1433.5,370 1435.5,370 1435.5,384 1433.5,384" fill="#77776a"/>
<circle cx="1552" cy="307.5" r="1.4" fill="#111"/>
<polyline points="1552,307.5 1552,303.5" fill="none" stroke="#111" stroke-width="1.3"/>
<polygon points="1327.4,411.2 1335.3,407.8 1344.8,410.2 1344.8,432.8 1336.2,436.5 1328.3,431.6" fill="#d9a48e" stroke="#777" stroke-width="0.5" fill-opacity="0.55"/>
<polygon points="1336.2,410.3 1339.9,411.2 1339.9,430.5 1336.2,429.5" fill="#f48c5e"/>
<polygon points="1339.9,411.2 1343.8,410.3 1343.8,431.5 1339.9,430.5" fill="#4a4e52"/>
<polyline points="1335.6,408 1336.2,436.5" fill="none" stroke="#8a6a5a" stroke-width="0.5"/>
<polyline points="1327.4,411.2 1336,413.5 1344.8,410.2" fill="none" stroke="#8a6a5a" stroke-width="0.4"/>
<polyline points="1344.8,410.2 1344.8,432.8" fill="none" stroke="#7c3216" stroke-width="0.6"/>
<polyline points="1368.5,409 1368.5,395" fill="none" stroke="#1a1aff" stroke-width="1.3"/>
<polyline points="1368.5,409 1359,411.5" fill="none" stroke="#ff1a1a" stroke-width="1.3"/>
<polyline points="1368.5,409 1380,411.5" fill="none" stroke="#18e018" stroke-width="1.3"/>
<polygon points="1713,87.5 1750.8,82 1791.8,86.6 1755.9,94" fill="#ffffff" stroke="#2a2a2a" stroke-width="0.9"/>
<polygon points="1713,87.5 1755.9,94 1755.6,158.4 1717.5,136.9" fill="#ffffff" stroke="#2a2a2a" stroke-width="0.9"/>
<polygon points="1755.9,94 1791.8,86.6 1786.9,136.1 1755.6,158.4" fill="#ffffff" stroke="#2a2a2a" stroke-width="0.9"/>
<text transform="matrix(0.80,0.33,0.04,1.3,1722,120.5)" font-family="Liberation Sans" font-size="9.5" fill="#8a8a8a">Справа</text>
<text transform="matrix(0.78,-0.52,-0.1,1.3,1764.500,133)" font-family="Liberation Sans" font-size="9.500" font-style="italic" fill="#888">Сзади</text>
</svg>

<!-- focus button -->
<div class="abs" style="left:958px;top:38px;width:32px;height:32px;background:#555">
<svg width="32" height="32" viewBox="0 0 32 32"><path d="M5 11V5h7M20 5h7v6M27 21v6h-7M12 27H5v-6" fill="none" stroke="#e2e2e2" stroke-width="1.6"/><path d="M16 9.5l5.6 3.2v6.6L16 22.5l-5.6-3.2v-6.6z" fill="#e2e2e2"/></svg>
</div>


<!-- ================= TOP BAR ================= -->
<div id="topbar">
<!-- logo -->
<div class="abs" style="left:5px;top:6px;width:48px;height:15px;background:#fff"></div>
<svg class="abs" style="left:5px;top:6px" width="48" height="15" viewBox="5 6 48 15">
<g fill="none" stroke="#151515" stroke-width="1.55">
<path d="M9.600 9.400V18.200"/>
<path d="M11.800 10.100h4.300c1.600 0 2.400.700 2.400 1.800s-.8 1.800-2.200 1.900h-3.200M13.100 13.800h3.400c1.700 0 2.500.800 2.500 1.900s-.9 1.900-2.600 1.900h-4.600"/>
<path d="M21.200 11.800v6.400"/>
<path d="M24.400 18.200V10.200l5.900 7.400 5.900-7.400v8"/>
<path d="M39.200 11.800v6.400"/>
<path d="M41.600 10.100h8.400M45.800 10.100v8.100"/>
</g>
<rect x="20.500" y="9.300" width="1.400" height="1.300" fill="#151515"/>
<rect x="38.300" y="9.100" width="1.800" height="1.700" fill="#f00"/>
</svg>

<!-- briefcase -->
<svg class="abs" style="left:358px;top:3px" width="22" height="22" viewBox="0 0 24 24"><g fill="none" stroke="#e6e6e6" stroke-width="1.800"><rect x="2.500" y="7" width="19" height="13.500" rx="1.500"/><path d="M8.500 7V4.200c0-.700.400-1 1-1h5c.600 0 1 .300 1 1V7M2.500 13.500h7M14.500 13.500h7"/><rect x="9.800" y="12" width="4.400" height="3.200" fill="#e6e6e6" stroke="none"/></g></svg>
<!-- people -->
<svg class="abs" style="left:390px;top:4px" width="26" height="20" viewBox="0 0 26 20"><g fill="#e6e6e6"><circle cx="13" cy="3.300" r="2.300"/><circle cx="4.600" cy="7.300" r="1.900"/><circle cx="21.400" cy="7.300" r="1.900"/><path d="M0.800 18v-3.200c0-2.300 1.600-3.700 3.800-3.700.500 0 1 .1 1.400.2-.9 1-1.500 2.300-1.500 3.900V18zM25.200 18v-3.200c0-2.300-1.600-3.700-3.800-3.700-.5 0-1 .1-1.400.2.900 1 1.500 2.300 1.500 3.900V18z"/></g><path d="M7 17.200v-2.600c0-3 2.500-5.200 6-5.200s6 2.200 6 5.200v2.600z" fill="none" stroke="#e6e6e6" stroke-width="1.700"/></svg>
<!-- shield -->
<svg class="abs" style="left:426px;top:3px" width="24" height="24" viewBox="0 0 24 24"><path d="M11 2.500L3.500 5.600v5.300c0 4.800 3.200 9.200 7.500 10.400.5-.1 1-.3 1.400-.5" fill="none" stroke="#e6e6e6" stroke-width="1.700"/><path d="M11 2.500l7.500 3.100v6.200" fill="none" stroke="#e6e6e6" stroke-width="1.700"/><circle cx="17.300" cy="17.300" r="4.400" fill="none" stroke="#e6e6e6" stroke-width="1.500"/><circle cx="17.300" cy="15.800" r="1.300" fill="#e6e6e6"/><path d="M14.800 19.400c.3-1.200 1.300-1.700 2.500-1.700s2.200.5 2.500 1.700c-.6.700-1.500 1.100-2.500 1.100s-1.900-.4-2.500-1.100z" fill="#e6e6e6"/></svg>
<div class="abs" style="left:453px;top:0;width:2px;height:30px;background:#3c3c3c"></div>
<div class="t" style="left:462px;top:9px;font-size:13.5px;color:#fff">Базовое пространство</div>
<div class="abs" style="left:638px;top:11px;border-left:5px solid transparent;border-right:5px solid transparent;border-top:5.500px solid #fff"></div>

<div class="t" style="left:1028px;top:5px;font-size:18.5px;color:#e8e8e8">Школа.</div>
<!-- gear -->
<svg class="abs" style="left:1106px;top:3px" width="23" height="23" viewBox="0 0 24 24"><path fill="#f0f0f0" d="M19.430 12.980c.04-.32.070-.64.070-.98s-.03-.66-.07-.98l2.110-1.650c.19-.15.240-.42.120-.64l-2-3.460c-.09-.16-.26-.25-.44-.25-.06 0-.12.010-.17.030l-2.490 1c-.52-.4-1.080-.73-1.690-.98l-.38-2.650C14.460 2.180 14.250 2 14 2h-4c-.25 0-.46.180-.49.420l-.38 2.650c-.61.250-1.170.59-1.690.98l-2.490-1c-.06-.02-.12-.03-.18-.03-.17 0-.34.090-.43.250l-2 3.460c-.13.220-.07.490.12.640l2.110 1.650c-.4.320-.7.650-.07.980s.03.660.07.980l-2.110 1.650c-.19.150-.24.420-.12.640l2 3.460c.09.160.26.250.44.250.06 0 .12-.01.170-.03l2.490-1c.52.400 1.080.73 1.690.98l.38 2.650c.3.240.24.420.49.420h4c.25 0 .46-.18.490-.42l.38-2.650c.61-.25 1.170-.59 1.690-.98l2.490 1c.6.020.12.030.18.030.17 0 .34-.09.43-.25l2-3.460c.12-.22.070-.49-.12-.64l-2.110-1.650zm-1.980-1.710c.04.310.05.520.05.730 0 .21-.2.430-.5.730l-.14 1.130.89.700 1.080.84-.7 1.210-1.270-.51-1.040-.42-.9.680c-.43.320-.84.560-1.250.73l-1.060.43-.16 1.130-.2 1.350h-1.400l-.19-1.350-.16-1.130-1.060-.43c-.43-.18-.83-.41-1.230-.71l-.91-.7-1.060.43-1.270.51-.7-1.210 1.080-.84.890-.7-.14-1.130c-.03-.31-.05-.54-.05-.74s.02-.43.050-.73l.14-1.130-.89-.7-1.080-.84.7-1.210 1.270.51 1.040.42.900-.68c.43-.32.840-.56 1.250-.73l1.060-.43.160-1.130.2-1.350h1.390l.19 1.350.16 1.130 1.060.43c.43.180.83.410 1.230.71l.91.700 1.060-.43 1.270-.51.700 1.210-1.070.85-.89.700.14 1.130zM12 8c-2.210 0-4 1.790-4 4s1.790 4 4 4 4-1.790 4-4-1.790-4-4-4zm0 6c-1.100 0-2-.9-2-2s.9-2 2-2 2 .9 2 2-.9 2-2 2z"/></svg>
<!-- share -->
<svg class="abs" style="left:1142px;top:3px" width="23" height="23" viewBox="0 0 24 24"><path fill="#e6e6e6" transform="translate(24,0) scale(-1,1)" d="M10 9V5l-7 7 7 7v-4.100c5 0 8.500 1.600 11 5.100-1-5-4-10-11-11z"/></svg>

<div class="abs" style="left:1670px;top:0;width:2px;height:30px;background:#3c3c3c"></div>
<!-- search -->
<svg class="abs" style="left:1692px;top:2px" width="25" height="25" viewBox="0 0 24 24"><path fill="#e6e6e6" d="M15.500 14h-.79l-.28-.27A6.471 6.471 0 0 0 16 9.500 6.500 6.500 0 1 0 9.500 16c1.610 0 3.090-.59 4.230-1.570l.27.280v.79l5 4.990L20.490 19l-4.990-5zm-6 0C7.010 14 5 11.990 5 9.500S7.010 5 9.500 5 14 7.010 14 9.500 11.990 14 9.500 14z"/></svg>
<!-- list -->
<svg class="abs" style="left:1760px;top:1px" width="25" height="25" viewBox="0 0 24 24"><path fill="#e6e6e6" d="M4 10.500c-.83 0-1.500.67-1.500 1.500s.67 1.500 1.500 1.500 1.500-.67 1.500-1.500-.67-1.500-1.500-1.500zm0-6c-.83 0-1.500.67-1.500 1.500S3.170 7.500 4 7.500 5.500 6.830 5.500 6 4.830 4.500 4 4.500zm0 12c-.83 0-1.500.68-1.500 1.500s.68 1.500 1.500 1.500 1.500-.68 1.500-1.500-.67-1.500-1.500-1.500zM7 19h14v-2H7v2zm0-6h14v-2H7v2zm0-8v2h14V5H7z"/></svg>
<!-- bell cycle -->
<svg class="abs" style="left:1794px;top:3px" width="24" height="24" viewBox="0 0 24 24"><path d="M18.600 11.200A7.700 7.700 0 1 0 16.400 17.900" fill="none" stroke="#e6e6e6" stroke-width="1.800"/><path d="M15.300 10.300h6.400l-3.200 3.900z" fill="#e6e6e6"/><path d="M7.200 14.700v-.8l1-1V9.800c0-1.700 1-3 2.400-3.400v-.4a.8.800 0 0 1 1.600 0v.4c1.400.4 2.400 1.700 2.400 3.400v3.100l1 1v.8zM10.400 15.500h2a1 1 0 0 1-2 0z" fill="#e6e6e6"/></svg>
<!-- account -->
<svg class="abs" style="left:1828px;top:2px" width="24" height="24" viewBox="0 0 24 24"><path fill="#e6e6e6" d="M3 5v14c0 1.100.89 2 2 2h14c1.100 0 2-.9 2-2V5c0-1.100-.9-2-2-2H5c-1.110 0-2 .9-2 2zm12 4c0 1.660-1.340 3-3 3s-3-1.340-3-3 1.340-3 3-3 3 1.340 3 3zm-9 8c0-2 4-3.100 6-3.100s6 1.100 6 3.100v1H6v-1z"/></svg>

</div>

<!-- ================= LEFT SIDEBAR ================= -->
<div class="sb" style="top:38px"><svg width="48" height="48" viewBox="0 0 48 48"><g fill="none" stroke="#e0e0e0" stroke-linecap="round"><path d="M11.300 12.200h5.600" stroke-width="5.600"/><path d="M19 12.200h4.200a2.200 2.200 0 0 1 2.200 2.200V35.600h4M25.400 16h4M25.400 25.800h4" stroke-width="2" stroke-linecap="butt"/><path d="M33.200 16h5M33.200 25.800h5M33.200 35.600h5" stroke-width="3.600"/></g></svg></div>
<div class="sb" style="top:88px"><svg width="48" height="48" viewBox="0 0 48 48"><g fill="#e0e0e0" stroke="#e0e0e0"><path d="M18.800 15.800V31M18.800 17l9.500 9.600" fill="none" stroke-width="2.200"/><circle cx="18.800" cy="15.600" r="2.700" stroke="none"/><circle cx="18.800" cy="31.200" r="2.900" stroke="none"/><circle cx="28.600" cy="26.800" r="2.900" stroke="none"/></g></svg></div>
<div class="sb" style="top:138px"><svg width="48" height="48" viewBox="0 0 48 48"><g fill="none" stroke="#e0e0e0" stroke-width="1.900" stroke-linecap="round" stroke-linejoin="round"><path d="M10.500 14.500c9 .5 10 8 14 13.500 3 4 7 5.500 14.500 5.300"/><path d="M10.500 33.500c9-.5 10-8 14-13.500 3-4 7-5.500 14.500-5.300"/><path d="M31.500 9.500l8 5.200-7 6.300"/><path d="M31.500 27l7.500 6.300-7.500 5.200"/></g></svg></div>
<div class="sb act" style="top:188px"><svg width="48" height="48" viewBox="0 0 48 48"><path d="M29.600 17.500v-2.500H16.800l7.600 8.800-8 9.200h13.500v-2.700" fill="none" stroke="#e6e6e6" stroke-width="2.800" stroke-linejoin="round" stroke-linecap="round"/></svg></div>
<div class="sb" style="top:238px"><svg width="48" height="48" viewBox="0 0 48 48"><path d="M26 17.300v-2.400H12.800l7.600 8.900-8 9h13.800v-2.600" fill="none" stroke="#e0e0e0" stroke-width="2.700" stroke-linejoin="round" stroke-linecap="round"/><path d="M29.300 24.600h8.200M33.400 20.500v8.200" stroke="#e0e0e0" stroke-width="2" fill="none"/></svg></div>
<div class="sb" style="top:288px"><svg width="48" height="48" viewBox="0 0 48 48"><g fill="none" stroke="#e0e0e0" stroke-width="1.800" stroke-linejoin="round"><path d="M11.800 10c7-1.200 16-1.200 23.600 0 -1 6-1.300 10-0.900 14.500.3 4 .3 8-0.300 12.200-7 .8-15 .8-22.200.2z"/><path d="M27.500 36.500c0-2.500 1-3.200 3-3.200h3.800" stroke-width="2.400"/></g><text x="15.500" y="27.500" font-family="Liberation Sans" font-size="9.800" fill="#e0e0e0">2D</text></svg></div>
<div class="sb" style="top:338px"><svg width="48" height="48" viewBox="0 0 48 48"><g fill="none" stroke="#e0e0e0" stroke-width="1.700"><rect x="20.600" y="8.800" width="7.800" height="9.400" rx="0.800"/><rect x="8.600" y="29.400" width="7.800" height="9.400" rx="0.800"/><rect x="20.600" y="29.400" width="7.800" height="9.400" rx="0.800"/><rect x="32" y="29.400" width="7.800" height="9.400" rx="0.800"/><path d="M24.500 18.200v11.200M12.500 29.400v-5.400h23.400v5.400"/></g></svg></div>
<div class="sb" style="top:388px"><svg width="48" height="48" viewBox="0 0 48 48"><g fill="none" stroke="#e0e0e0" stroke-width="2" stroke-linecap="round" stroke-linejoin="round"><path d="M12.500 14.800c3-2.600 6-3 8-.8s4 4.500 6.500 3l9.500-8"/><path d="M12.500 25c3-2 5.500-2 7.500 0s3.500 4.500 6.500 3 6-3 10-3.400"/><path d="M12.800 36.500h23.400" stroke-width="1.700"/></g></svg></div>
<div class="sb" style="top:438px"><svg width="48" height="48" viewBox="0 0 48 48"><path d="M19.3 15.100c-.6-3.600 1.200-6.200 3.900-6.200s4.500 2.600 3.900 6.200h5.100q1.300 0 1.300 1.300v3.900c3.400-.6 5.400 1 5.400 3.800s-2 4.400-5.400 3.800v5.900q0 1.300-1.300 1.300h-5.300c.6-3-.7-4.600-2.900-4.600s-3.500 1.600-2.900 4.600h-6.100q-1.300 0-1.300-1.300v-5.600c3 .6 4.500-.8 4.500-2.900s-1.500-3.500-4.500-2.900v-6q0-1.300 1.300-1.300z" fill="none" stroke="#e0e0e0" stroke-width="1.800" stroke-linejoin="round"/></svg></div>
<div class="sb" style="top:488px"><svg width="48" height="48" viewBox="0 0 48 48"><g fill="none" stroke="#e0e0e0" stroke-width="1.900" stroke-linecap="round"><circle cx="23.200" cy="16.200" r="5.800"/><path d="M11.800 34.200c.3-6 5-9.300 11.400-9.300 4 0 7.400 1.400 9.600 4M11.800 34.200h11.600"/><path d="M26.800 33.200l4 4.600 7.700-9.600" stroke-width="2.600" stroke-linejoin="round"/></g></svg></div>
<div class="sb" style="top:538px"><svg width="48" height="48" viewBox="0 0 48 48"><g fill="none" stroke="#e0e0e0" stroke-width="1.900" stroke-linejoin="round" stroke-linecap="round"><path d="M13.300 35.200c-1.800 0-2.500-.8-2.900-2.500L8.300 13.800c-.2-1.500.5-2.300 2-2.300h6.200l3.300 4.300h10c1.500 0 2.300.8 2.500 2.300l.8 6"/><path d="M13.300 35.200h18.500c1.500 0 2.400-.7 3.100-2l4.200-7c.6-1.100.1-1.900-1.200-1.900H24"/><path d="M33.500 29h-12M25.800 24.300l-4.700 4.700 4.700 4.700"/></g></svg></div>
<div class="sb" style="top:588px"><svg width="48" height="48" viewBox="0 0 48 48"><g fill="none" stroke="#e0e0e0" stroke-width="1.900" stroke-linecap="round"><circle cx="18.800" cy="15.600" r="5.600"/><path d="M8.400 33.500c.3-6 4.600-9.300 10.400-9.300 3.500 0 6.300 1.200 8.300 3.300M8.400 33.500h17"/><path d="M33 39.500c-3.800-3.600-5.700-6.200-5.700-8.800a5.700 5.700 0 0 1 11.400 0c0 2.600-1.900 5.200-5.700 8.800z" stroke-linejoin="round"/></g><circle cx="33" cy="30.700" r="2.200" fill="#e0e0e0"/></svg></div>
<div class="sb" style="top:638px"><svg width="48" height="48" viewBox="0 0 48 48"><g fill="none" stroke="#e0e0e0"><circle cx="24.300" cy="21" r="12.700" stroke-width="2"/><path d="M24.300 33.700v5.200M9.500 39.200h30" stroke-width="1.900"/><path d="M15.800 20.500a9 9 0 0 1 17.200 0" stroke-width="0.900" stroke-dasharray="1.200 1.300"/></g><path d="M27.4 11.600l-0.800 14.200c-.3 1.500-4.400 1.500-4.800-.2z" fill="#e0e0e0"/></svg></div>
<div class="abs" style="left:16px;top:782px;width:24px;height:24px;border-radius:12px;background:#4c4a4a"></div>
<div class="t" style="left:22.500px;top:785px;font-size:18px;font-weight:bold;color:#fff">?</div>


<!-- ================= PANEL ================= -->
<div id="panel">
<!-- tabs -->
<svg class="abs" style="left:10px;top:20px" width="19" height="16" viewBox="0 0 19 16"><path d="M0.600 2.100h14M0.600 7.300h14M0.600 11.900h8.400" stroke="#f2f2f2" stroke-width="2" fill="none"/><path d="M12 9.300v5.200l5-2.600z" fill="#f2f2f2"/></svg>
<div class="t" style="left:57px;top:20px;font-size:15.5px;letter-spacing:.55px;color:#f0f0f0">Классификатор</div>
<div class="abs" style="left:41px;top:44px;width:151px;height:2px;background:#f0f0f0"></div>
<div class="t" style="left:208px;top:20px;font-size:15.5px;letter-spacing:.5px;color:#9a9a9a">Нераспределённые элементы</div>
<div class="t" style="left:471px;top:20px;font-size:15.5px;letter-spacing:.5px;color:#9a9a9a">Универсальные атрибуты</div>
<svg class="abs" style="left:851px;top:20px" width="17" height="17" viewBox="0 0 17 17"><path d="M2 2l13 13M15 2L2 15" stroke="#f2f2f2" stroke-width="1.9" fill="none"/></svg>

<!-- left sub panel -->
<div class="hdr" style="left:5px;width:434px"><div class="t" style="letter-spacing:-.45px">Классификатор</div>
<div class="abs" style="left:417px;top:15px;border-left:5px solid transparent;border-right:5px solid transparent;border-top:5px solid #e0e0e0"></div></div>
<div class="body" style="left:5px;width:434px">
  <svg class="abs" style="left:8px;top:9px" width="205" height="40"><rect x="0.500" y="0.500" width="204" height="39" rx="5" fill="none" stroke="#3d8fb3" stroke-width="1" stroke-dasharray="2 3"/></svg>
  <div class="t" style="left:20px;top:24px;font-size:13.5px;letter-spacing:-.26px;color:#3d8fb3">Собственный кл...</div>
  <div class="abs" style="left:184px;top:27px;border-left:5px solid transparent;border-right:5px solid transparent;border-top:5px solid #3d8fb3"></div>
  <div class="fld" style="left:221px;top:9px;width:205px"></div>
  <div class="t" style="left:233px;top:21px;font-size:13.5px;color:#666">Поиск по коду</div>

  <svg class="abs" style="left:4px;top:62px" width="10" height="14" viewBox="0 0 10 14"><path d="M2 5l3-3 3 3M2 9l3 3 3-3" stroke="#3d8fb3" stroke-width="1.5" fill="none"/></svg>
  <div class="t" style="left:25px;top:64px;font-size:10.5px;letter-spacing:.6px;color:#3d8fb3">Свернуть дерево</div>
  <svg class="abs" style="left:356px;top:62px" width="12" height="14" viewBox="0 0 12 14"><path d="M0.5 1h11L7.5 6.5V12.5h-3V6.5z" fill="#3d8fb3"/></svg>
  <div class="t" style="left:376px;top:64px;font-size:10.5px;letter-spacing:.29px;color:#3d8fb3">ФИЛЬТРЫ</div>

  <div class="row" style="top:87px"><i class="car" style="left:4px"></i><b style="margin-left:22px">001 - Раздел-01</b></div>
  <div class="row" style="top:111px"><i class="car" style="left:12px"></i><b style="margin-left:30px">01 - Раздел-1</b></div>
  <div class="row" style="top:135px"><i class="car" style="left:20px"></i><b style="margin-left:38px">01-1 - Подраздел-1.1</b></div>
  <div class="row" style="top:159px"><i class="car" style="left:28px"></i><b style="margin-left:46px">01-1-1 - Новый класс - 01-1-1</b></div>
  <div class="row" style="top:183px;height:23px;line-height:25px;background:#c4c4c4"><span style="margin-left:54px;letter-spacing:-.19px">Новое правило</span></div>
  <div class="row" style="top:207px"><span style="margin-left:46px">01-1-2 - Работы - 1</span></div>
  <div class="row" style="top:231px"><i class="car" style="left:12px"></i><span style="margin-left:30px">02 - Раздел-2</span></div>
  <div class="row" style="top:255px"><span style="margin-left:38px">02-1 - Материалы - 1</span></div>
  <div class="row" style="top:279px"><span style="margin-left:38px">02-2 - Машины - 1</span></div>
</div>

<!-- right sub panel -->
<div class="hdr" style="left:447px;width:427px"><div class="t" style="letter-spacing:-.5px">Новое правило</div>
<div class="abs" style="left:410px;top:15px;border-left:5px solid transparent;border-right:5px solid transparent;border-top:5px solid #e0e0e0"></div></div>
<div class="body" style="left:447px;width:427px">
  <div class="fld" style="left:8px;top:9px;width:193px"></div>
  <div class="lbl" style="left:17px;top:6px">Название</div>
  <div class="t" style="left:20px;top:23px;font-size:13.5px;letter-spacing:-.2px;color:#222">Новое правило</div>
  <div class="fld" style="left:225px;top:9px;width:193px"></div>
  <div class="lbl" style="left:233px;top:6px">Тип правила</div>
  <div class="t" style="left:237px;top:24px;font-size:13.5px;letter-spacing:-.19px;color:#222">Простое правило</div>
  <div class="abs" style="left:389px;top:27px;border-left:5px solid transparent;border-right:5px solid transparent;border-top:5px solid #666"></div>

  <div class="t" style="left:9px;top:69px;font-size:12.5px;letter-spacing:-.26px;color:#333">Условие отбора элемента</div>

  <div class="abs" style="left:8px;top:91px;width:411px;height:216px;background:#fff;border-radius:4px;box-shadow:0 1px 3px rgba(0,0,0,.35),0 1px 8px rgba(0,0,0,.12)"></div>
  <div class="abs" style="left:24px;top:107px;width:379px;height:128px;border:1px solid #8a8a8a;border-radius:3px"></div>
  <div class="abs" style="left:16px;top:259px;width:40px;height:40px;border-radius:20px;background:#f3f3f3"></div>
  <svg class="abs" style="left:24px;top:270px" width="24" height="18" viewBox="0 0 24 18"><path d="M9.5 4L4 9l5.5 5M14.5 4L20 9l-5.5 5" stroke="#111" stroke-width="2" fill="none"/></svg>
  <div class="abs" style="left:370px;top:259px;width:41px;height:41px;border-radius:21px;background:#3b8fae"></div>
  <svg class="abs" style="left:379px;top:269px" width="24" height="20" viewBox="0 0 24 20"><path d="M3.5 10.5l5.5 5.5L20.5 4" stroke="#fff" stroke-width="2.4" fill="none"/></svg>

  <!-- red arrows -->
  <svg class="abs" style="left:30px;top:200px" width="180" height="120" viewBox="538 324 180 120">
    <defs><filter id="ash" x="-20%" y="-20%" width="150%" height="150%"><feGaussianBlur in="SourceAlpha" stdDeviation="1.6"/><feOffset dx="2.5" dy="2.5"/><feComponentTransfer><feFuncA type="linear" slope="0.55"/></feComponentTransfer><feMerge><feMergeNode/><feMergeNode in="SourceGraphic"/></feMerge></filter></defs>
    <g filter="url(#ash)" fill="#c00000" stroke="#c00000">
      <path d="M695 421L668 354" stroke-width="2.4" fill="none"/>
      <path d="M695 421L582 406" stroke-width="2.4" fill="none"/>
      <path d="M663 341l11.5 9.5-12.5 5z" stroke-width="1"/>
      <path d="M565 404.5l15-7.5-1.8 14z" stroke-width="1"/>
    </g>
  </svg>

  <div class="t" style="left:9px;top:329px;font-size:12.5px;letter-spacing:-.34px;color:#333">Единица измерения - 1 шт</div>
  <svg class="abs" style="left:158px;top:329px" width="12" height="12" viewBox="0 0 24 24"><path fill="#777" d="M19.4 13c.04-.3.06-.7.06-1s-.02-.7-.07-1l2.100-1.650c.2-.15.250-.42.130-.64l-2-3.460c-.12-.22-.39-.3-.61-.22l-2.490 1c-.52-.4-1.080-.73-1.690-.98l-.38-2.650A.49.49 0 0 0 14 2h-4c-.25 0-.46.180-.49.420l-.38 2.650c-.61.250-1.170.59-1.690.98l-2.490-1c-.23-.09-.49 0-.61.220l-2 3.460c-.13.220-.07.490.12.640L4.570 11c-.04.300-.07.700-.07 1s.02.700.07 1l-2.110 1.650c-.19.150-.24.420-.12.640l2 3.460c.12.220.39.300.61.220l2.490-1c.52.400 1.080.73 1.690.98l.38 2.650c.3.240.24.420.49.420h4c.25 0 .46-.18.490-.42l.38-2.650c.61-.25 1.170-.59 1.690-.98l2.490 1c.23.090.49 0 .61-.22l2-3.460c.12-.22.070-.49-.12-.64L19.400 13zM12 16.500c-2.480 0-4.500-2.020-4.500-4.500S9.520 7.500 12 7.500s4.500 2.020 4.500 4.500-2.020 4.500-4.500 4.500zm0-7a2.500 2.500 0 1 0 0 5 2.500 2.500 0 0 0 0-5z"/></svg>
  <div class="abs" style="left:8px;top:347px;width:411px;height:31px;background:#f0f0f0"></div>
  <div class="t" style="left:14px;top:355px;font-size:14.5px;letter-spacing:-.05px;color:#4a627e">Указать источник измерения</div>

  <div class="t" style="left:9px;top:400px;font-size:12.5px;letter-spacing:-.22px;color:#333">Атрибут названия</div>
  <div class="abs" style="left:8px;top:418px;width:411px;height:31px;background:#f0f0f0"></div>
  <div class="t" style="left:14px;top:426px;font-size:14.5px;letter-spacing:0;color:#555">Указать источник названия</div>

  <div class="fld" style="left:8px;top:469px;width:411px"></div>
  <div class="lbl" style="left:16px;top:466px;letter-spacing:.12px">Тип выгрузки</div>
  <div class="t" style="left:20px;top:484px;font-size:13.5px;letter-spacing:-.06px;color:#222">Выгрузка по умолчанию</div>
  <div class="abs" style="left:389px;top:487px;border-left:5px solid transparent;border-right:5px solid transparent;border-top:5px solid #666"></div>

  <div class="abs" style="left:11px;top:545px;width:15px;height:15px;border:2px solid #777;border-radius:2px"></div>
  <div class="t" style="left:37px;top:547px;font-size:12.5px;letter-spacing:-.2px;color:#333">Выгружать объем материалов</div>

  <div class="t" style="left:13px;top:583px;font-size:12px;letter-spacing:.75px;color:#777">•ПРОВЕРИТЬ ПРАВИЛО</div>
  <div class="t" style="left:175px;top:583px;font-size:12px;letter-spacing:.75px;color:#777">•ПРОВЕРИТЬ ЭЛЕМЕНТ</div>
</div>

<div class="abs" style="left:883px;top:406px;width:2px;height:27px;background:#3d8fb3"></div>

</div>

<!-- ================= RIGHT TOOLBAR ================= -->
<div id="rtool">
<!-- 1 cloud tree -->
<svg class="rb" style="top:6px" viewBox="0 0 36 36"><g fill="none" stroke="#e0e0e0" stroke-width="1.700" stroke-linecap="round" stroke-linejoin="round"><path d="M14.500 24.500h-3.300c-3 0-5-2-5-4.600 0-2.400 1.800-4.300 4.200-4.500.2-3.900 3.400-6.600 7.400-6.600 3.800 0 6.900 2.500 7.500 6 2.700.2 4.600 2.200 4.600 4.800 0 2.700-2.100 4.900-5 4.900h-3.400"/><path d="M18 29V15.500M18 22l-3.500-3.600M18 22.800l3.600-3.600"/></g></svg>
<!-- 2 screen focus -->
<svg class="rb" style="top:50px" viewBox="0 0 36 36"><g fill="none" stroke="#e0e0e0" stroke-width="1.600"><path d="M12.500 25.600H5.300V6.400h23.400v6.800M8.300 29.200h4.400"/><path d="M15.500 19.500v-4h4M25 15.500h4v4M29 26v4h-4M19.500 30h-4v-4" stroke-width="1.500"/></g><path d="M22.300 17.800l4.300 2.500v5L22.300 27.800 18 25.300v-5z" fill="#e0e0e0"/></svg>
<div class="abs" style="left:0;top:92px;width:36px;height:1px;background:#3f3f3f"></div>
<!-- 3 ruler -->
<svg class="rb" style="top:100px" viewBox="0 0 36 36"><g fill="none" stroke="#e0e0e0"><rect x="5" y="12.300" width="26" height="8.400" stroke-width="1.500"/><path d="M4.500 23.200h27" stroke-width="1.800"/><path d="M8.500 20.500v-3M11.500 20.500v-4.500M14.500 20.500v-3M17.500 20.500v-5M20.500 20.500v-3M23.500 20.500v-4.500M26.500 20.500v-3M28.600 20.500v-4" stroke-width="1.100"/></g></svg>
<!-- 4 section plane -->
<svg class="rb" style="top:142px" viewBox="0 0 36 36"><path d="M13.200 13.800L23 5.300V24.200L13.200 32.700z" fill="#e0e0e0"/><path d="M13.400 15.400L4.900 21.700H23L31.500 15.400H23" fill="none" stroke="#e0e0e0" stroke-width="1.400" stroke-linejoin="round"/><path d="M13.200 15.400H23" stroke="#666" stroke-width="1"/></svg>
<!-- 5 cube sectioned -->
<svg class="rb" style="top:187px" viewBox="0 0 36 36"><path d="M15 8.500l5.500-1.800v19.500L15 28.500z" fill="#e0e0e0"/><g fill="none" stroke="#e0e0e0" stroke-width="1.300" stroke-linejoin="round"><path d="M6.500 13.500h16v16h-16zM6.500 13.500l6.500-6.800h16l-6.500 6.800M29 6.700v16l-6.500 6.800M13 6.700v16l-6.500 6.800M13 22.700h16"/></g></svg>
<!-- 6 plan -->
<svg class="rb" style="top:231px" viewBox="0 0 36 36"><g fill="none" stroke="#e0e0e0"><path d="M5.300 11l3.300-3.600h20.800v18.800H5.300z" stroke-width="1.600" stroke-linejoin="round"/><path d="M6 28.200h25.600V9.500" stroke-width="1.800"/><path d="M5.500 17h24M17 7.500v18.500" stroke-width="1.200" stroke-dasharray="3.500 1.300 1.200 1.300"/><path d="M22.800 26v-2.800h6.400" stroke-width="1.300"/></g></svg>
<!-- 7 target -->
<svg class="rb" style="top:275px" viewBox="0 0 36 36"><circle cx="18" cy="18" r="7.700" fill="none" stroke="#e0e0e0" stroke-width="2.300"/><circle cx="18" cy="18" r="3.500" fill="#e0e0e0"/><path d="M18 6.500v4M18 25.500v4M6.500 18h4M25.500 18h4" stroke="#e0e0e0" stroke-width="2.400"/></svg>
<!-- 8 flag -->
<svg class="rb" style="top:319px" viewBox="0 0 36 36"><circle cx="18" cy="18" r="12.500" fill="none" stroke="#e0e0e0" stroke-width="1.300"/><path d="M12 25.500V11.800c3.500-1.400 5.500-.5 7.300.3s3.700 1 5.700.1v8.300c-2 .9-3.900.7-5.700-.1s-3.800-1.700-7.300-.3" fill="none" stroke="#e0e0e0" stroke-width="1.500" stroke-linejoin="round"/></svg>
<div class="abs" style="left:0;top:361px;width:36px;height:1px;background:#3f3f3f"></div>
<!-- 9 lines -->
<svg class="rb" style="top:368px" viewBox="0 0 36 36"><g stroke="#e0e0e0" stroke-width="1.100" fill="none"><path d="M3 22.100L33 5.300M3.400 31.900L33 15.400M4.300 16.400L22.600 27M12.800 10.100L31.500 20.600"/></g><text x="2.800" y="14.200" font-family="Liberation Sans" font-size="5.500" font-weight="bold" fill="#e0e0e0">1</text><text x="13" y="7.900" font-family="Liberation Sans" font-size="5.500" font-weight="bold" fill="#e0e0e0">2</text></svg>
<div class="abs" style="left:0;top:410px;width:36px;height:1px;background:#3f3f3f"></div>
<!-- 10 cube dashed -->
<svg class="rb" style="top:417px" viewBox="0 0 36 36"><rect x="6.300" y="6.300" width="23.400" height="23.400" fill="none" stroke="#e0e0e0" stroke-width="1.200" stroke-dasharray="1.900 1.700"/><path d="M18 11.500l5.600 3.100v6.600L18 24.500l-5.600-3.300v-6.600zM12.600 14.700l5.400 3.100 5.400-3.100M18 17.800v6.500" fill="none" stroke="#e0e0e0" stroke-width="1.300" stroke-linejoin="round"/></svg>
<!-- 11 eye dashed -->
<svg class="rb" style="top:461px" viewBox="0 0 36 36"><rect x="6.300" y="6.300" width="23.400" height="23.400" fill="none" stroke="#e0e0e0" stroke-width="1.200" stroke-dasharray="1.900 1.700"/><path d="M10.300 18c1.700-3.300 4.500-5 7.700-5s6 1.700 7.700 5c-1.700 3.300-4.500 5-7.700 5s-6-1.700-7.700-5z" fill="#e0e0e0"/><circle cx="18" cy="18" r="2.900" fill="#555"/><circle cx="18" cy="18" r="1.300" fill="#e0e0e0"/></svg>
<!-- 12 eye-off dashed -->
<svg class="rb" style="top:505px" viewBox="0 0 36 36"><rect x="6.300" y="6.300" width="23.400" height="23.400" fill="none" stroke="#e0e0e0" stroke-width="1.200" stroke-dasharray="1.900 1.700"/><path d="M10.300 18c1.700-3.300 4.500-5 7.700-5s6 1.700 7.700 5c-1.700 3.300-4.500 5-7.700 5s-6-1.700-7.700-5z" fill="#e0e0e0"/><circle cx="18" cy="18" r="2.900" fill="#555"/><circle cx="18" cy="18" r="1.300" fill="#e0e0e0"/><path d="M11.500 11.500l13 13.500" stroke="#555" stroke-width="3.200"/><path d="M11.500 11.500l13 13.500" stroke="#e0e0e0" stroke-width="1.300"/></svg>
<!-- 13 x dashed -->
<svg class="rb" style="top:549px" viewBox="0 0 36 36"><path d="M16 29.700H6.300V6.300h23.400V16" fill="none" stroke="#e0e0e0" stroke-width="1.200" stroke-dasharray="1.900 1.700"/><rect x="16.500" y="16.500" width="15.500" height="15.500" fill="#e0e0e0"/><path d="M20.300 20.300l8 8M28.300 20.300l-8 8" stroke="#444" stroke-width="1.400"/></svg>
<div class="abs" style="left:0;top:591px;width:36px;height:1px;background:#3f3f3f"></div>
<!-- 14 cube active -->
<div class="abs" style="left:2px;top:600px;width:32px;height:32px;background:#8d8d8d"></div>
<svg class="abs" style="left:2px;top:600px" width="32" height="32" viewBox="0 0 32 32"><path d="M4.500 7.500l11-3 12 3.500-1.500 15-10 5.500-9-7z" fill="#e6e6e6"/><path d="M16.500 11.800l11-3.800-1.500 15-9.500 5.500z" fill="#7b7b7b"/><path d="M4.500 7.500l12 4.300 11-3.800" fill="none" stroke="#a5a5a5" stroke-width="0.800"/></svg>
<!-- 15 orbit active -->
<div class="abs" style="left:2px;top:644px;width:32px;height:32px;background:#8d8d8d"></div>
<svg class="abs" style="left:2px;top:644px" width="32" height="32" viewBox="0 0 32 32"><g fill="none" stroke="#e4e4e4"><ellipse cx="16" cy="16" rx="11.500" ry="6.200" stroke-width="2.200"/><ellipse cx="16" cy="16" rx="5.800" ry="10.800" stroke-width="2.200"/><path d="M16 13.500V17l-3 3.300M16 17l3.300 3.300" stroke-width="1.200"/></g></svg>
<div class="abs" style="left:0;top:684px;width:36px;height:1px;background:#3f3f3f"></div>
<svg class="abs" style="left:2px;top:768px" width="6" height="6" viewBox="0 0 6 6"><path d="M0.500 0.500v5h5z" fill="#fff"/></svg>

</div>

</div>
</body>
</html>
